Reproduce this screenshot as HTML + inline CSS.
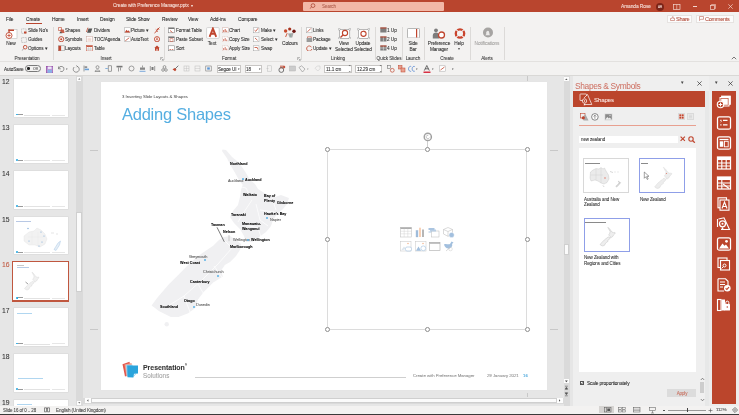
<!DOCTYPE html><html><head><meta charset="utf-8"><style>
html,body{margin:0;padding:0;}
body{width:739px;height:415px;overflow:hidden;position:relative;background:#f3f2f1;font-family:"Liberation Sans",sans-serif;}
.t{position:absolute;white-space:nowrap;will-change:transform;-webkit-text-stroke:0.07px currentColor;}
.r{position:absolute;}
</style></head><body>

<div class="r" style="left:0px;top:0px;width:739px;height:12.4px;background:#b9452e;"></div>
<div class="t" style="left:113px;top:2.47px;font-size:4.78px;line-height:7.65px;color:#f7e3dd;font-weight:400;letter-spacing:-0.092px;">Create with Preference Manager.pptx</div>
<div class="t" style="left:190.5px;top:2.97px;font-size:4.16px;line-height:6.66px;color:#f7e3dd;font-weight:400;letter-spacing:-0.080px;">&#9662;</div>
<div class="r" style="left:302.8px;top:2px;width:141px;height:8.7px;background:#f2b8a7;border-radius:1px;"></div>
<svg class="r" style="left:309px;top:3px;" width="7" height="6" viewBox="0 0 7 6"><circle cx="4" cy="2.6" r="1.9" fill="none" stroke="#a33a26" stroke-width="0.7"/><line x1="2.6" y1="4" x2="0.8" y2="5.6" stroke="#a33a26" stroke-width="0.7"/></svg>
<div class="t" style="left:321.8px;top:2.83px;font-size:4.58px;line-height:7.33px;color:#b0604f;font-weight:400;letter-spacing:-0.088px;">Search</div>
<div class="t" style="left:620.5px;top:2.79px;font-size:4.89px;line-height:7.82px;color:#f7e3dd;font-weight:400;letter-spacing:-0.094px;">Amanda Rose</div>
<div class="r" style="left:655.7px;top:2.5px;width:8px;height:8px;border-radius:50%;background:#7c2418;"></div>
<div class="t" style="left:559.7px;width:200px;text-align:center;top:4.71px;font-size:3.12px;line-height:4.99px;color:#f3d6cf;font-weight:400;letter-spacing:-0.060px;">AR</div>
<svg class="r" style="left:673px;top:3.5px;" width="8" height="6" viewBox="0 0 8 6"><rect x="0.5" y="0.5" width="6.5" height="5" fill="none" stroke="#f3d6cf" stroke-width="0.7"/><line x1="3.75" y1="0.5" x2="3.75" y2="5.5" stroke="#f3d6cf" stroke-width="0.6"/></svg>
<div class="r" style="left:692.5px;top:6.2px;width:4.5px;height:0.7px;background:#f3d6cf;"></div>
<svg class="r" style="left:709.5px;top:3.5px;" width="6" height="6" viewBox="0 0 6 6"><rect x="0.5" y="1.5" width="4" height="4" fill="none" stroke="#f3d6cf" stroke-width="0.7"/><path d="M1.5 1.5V0.5H5.5V4.5H4.5" fill="none" stroke="#f3d6cf" stroke-width="0.6"/></svg>
<svg class="r" style="left:727.5px;top:4px;" width="5" height="5" viewBox="0 0 5 5"><path d="M0.3 0.3L4.7 4.7M4.7 0.3L0.3 4.7" stroke="#f3d6cf" stroke-width="0.7"/></svg>
<div class="t" style="left:6.3px;top:15.79px;font-size:4.89px;line-height:7.82px;color:#262626;font-weight:400;letter-spacing:-0.094px;">File</div>
<div class="t" style="left:26px;top:15.79px;font-size:4.89px;line-height:7.82px;color:#262626;font-weight:400;letter-spacing:-0.094px;">Create</div>
<div class="t" style="left:51.7px;top:15.79px;font-size:4.89px;line-height:7.82px;color:#262626;font-weight:400;letter-spacing:-0.094px;">Home</div>
<div class="t" style="left:76.6px;top:15.79px;font-size:4.89px;line-height:7.82px;color:#262626;font-weight:400;letter-spacing:-0.094px;">Insert</div>
<div class="t" style="left:99.8px;top:15.79px;font-size:4.89px;line-height:7.82px;color:#262626;font-weight:400;letter-spacing:-0.094px;">Design</div>
<div class="t" style="left:126px;top:15.79px;font-size:4.89px;line-height:7.82px;color:#262626;font-weight:400;letter-spacing:-0.094px;">Slide Show</div>
<div class="t" style="left:162px;top:15.79px;font-size:4.89px;line-height:7.82px;color:#262626;font-weight:400;letter-spacing:-0.094px;">Review</div>
<div class="t" style="left:188px;top:15.79px;font-size:4.89px;line-height:7.82px;color:#262626;font-weight:400;letter-spacing:-0.094px;">View</div>
<div class="t" style="left:209.5px;top:15.79px;font-size:4.89px;line-height:7.82px;color:#262626;font-weight:400;letter-spacing:-0.094px;">Add-ins</div>
<div class="t" style="left:238px;top:15.79px;font-size:4.89px;line-height:7.82px;color:#262626;font-weight:400;letter-spacing:-0.094px;">Compare</div>
<div class="r" style="left:26px;top:23px;width:15.5px;height:0.9px;background:#b9452e;"></div>
<div class="r" style="left:667.3px;top:14.7px;width:24.7px;height:8.5px;background:#fcfcfc;box-sizing:border-box;border:0.5px solid #e6e3e1;"></div>
<svg class="r" style="left:669.8px;top:16.2px;" width="5" height="5" viewBox="0 0 5 5"><path d="M0.5 4.5V2.5H1.5L2.8 0.5 3.3 1 2.8 2.3H4.5V4.5Z" fill="none" stroke="#b04a38" stroke-width="0.5"/></svg>
<div class="t" style="left:676px;top:15.12px;font-size:5.6px;line-height:8.96px;color:#b04a38;font-weight:400;letter-spacing:-0.3px;">Share</div>
<div class="r" style="left:696.4px;top:14.7px;width:37.9px;height:8.5px;background:#fcfcfc;box-sizing:border-box;border:0.5px solid #e6e3e1;"></div>
<svg class="r" style="left:699px;top:16.2px;" width="5" height="5" viewBox="0 0 5 5"><path d="M0.5 0.5H4.5V3.3H1.8L0.5 4.5Z" fill="none" stroke="#b04a38" stroke-width="0.5"/></svg>
<div class="t" style="left:705px;top:15.12px;font-size:5.6px;line-height:8.96px;color:#b04a38;font-weight:400;letter-spacing:-0.33px;">Comments</div>
<div class="r" style="left:0px;top:60.8px;width:739px;height:0.9px;background:#e3e1df;"></div>
<div class="r" style="left:53.2px;top:26.5px;width:0.6px;height:33.5px;background:#dcdad8;"></div>
<div class="r" style="left:163.9px;top:26.5px;width:0.6px;height:33.5px;background:#dcdad8;"></div>
<div class="r" style="left:301.3px;top:26.5px;width:0.6px;height:33.5px;background:#dcdad8;"></div>
<div class="r" style="left:375.4px;top:26.5px;width:0.6px;height:33.5px;background:#dcdad8;"></div>
<div class="r" style="left:402.4px;top:26.5px;width:0.6px;height:33.5px;background:#dcdad8;"></div>
<div class="r" style="left:424.4px;top:26.5px;width:0.6px;height:33.5px;background:#dcdad8;"></div>
<div class="r" style="left:470px;top:26.5px;width:0.6px;height:33.5px;background:#dcdad8;"></div>
<div class="r" style="left:503.9px;top:26.5px;width:0.6px;height:33.5px;background:#dcdad8;"></div>
<div class="t" style="left:-73.5px;width:200px;text-align:center;top:55.46px;font-size:4.68px;line-height:7.49px;color:#3a3a3a;font-weight:400;letter-spacing:-0.090px;">Presentation</div>
<div class="t" style="left:6px;width:200px;text-align:center;top:55.46px;font-size:4.68px;line-height:7.49px;color:#3a3a3a;font-weight:400;letter-spacing:-0.090px;">Insert</div>
<div class="t" style="left:129px;width:200px;text-align:center;top:55.46px;font-size:4.68px;line-height:7.49px;color:#3a3a3a;font-weight:400;letter-spacing:-0.090px;">Format</div>
<div class="t" style="left:238px;width:200px;text-align:center;top:55.46px;font-size:4.68px;line-height:7.49px;color:#3a3a3a;font-weight:400;letter-spacing:-0.090px;">Linking</div>
<div class="t" style="left:288.5px;width:200px;text-align:center;top:55.46px;font-size:4.68px;line-height:7.49px;color:#3a3a3a;font-weight:400;letter-spacing:-0.090px;">Quick Slides</div>
<div class="t" style="left:313px;width:200px;text-align:center;top:55.46px;font-size:4.68px;line-height:7.49px;color:#3a3a3a;font-weight:400;letter-spacing:-0.090px;">Launch</div>
<div class="t" style="left:347px;width:200px;text-align:center;top:55.46px;font-size:4.68px;line-height:7.49px;color:#3a3a3a;font-weight:400;letter-spacing:-0.090px;">Create</div>
<div class="t" style="left:387.3px;width:200px;text-align:center;top:55.46px;font-size:4.68px;line-height:7.49px;color:#3a3a3a;font-weight:400;letter-spacing:-0.090px;">Alerts</div>
<svg class="r" style="left:730.8px;top:56.2px;" width="6" height="4" viewBox="0 0 6 4"><path d="M0.8 3.2L3 1 5.2 3.2" fill="none" stroke="#444" stroke-width="0.7"/></svg>
<svg class="r" style="left:4.5px;top:27.5px;" width="13" height="12" viewBox="0 0 13 12"><rect x="3.5" y="1.5" width="8.5" height="9" fill="#fff" stroke="#bdbdbd" stroke-width="0.6"/><path d="M3.5 1.5H9V3H3.5Z" fill="#c0462f"/><rect x="3.5" y="1.5" width="1.2" height="3.5" fill="#c0462f"/><circle cx="4" cy="7.5" r="3" fill="#fff" stroke="#c0462f" stroke-width="0.9"/><path d="M4 5.8V9.2M2.3 7.5H5.7" stroke="#c0462f" stroke-width="0.8"/></svg>
<div class="t" style="left:-88.7px;width:200px;text-align:center;top:39.77px;font-size:4.78px;line-height:7.65px;color:#2b2b2b;font-weight:400;letter-spacing:-0.092px;">New</div>
<svg class="r" style="left:21px;top:27.5px;" width="6" height="6" viewBox="0 0 6 6"><rect x="0.5" y="0.8" width="4.5" height="4.5" fill="none" stroke="#9a9a9a" stroke-width="0.5" stroke-dasharray="1 0.5"/><rect x="3" y="3.5" width="2.5" height="2" fill="#c0462f"/></svg>
<div class="t" style="left:28px;top:27.05px;font-size:4.68px;line-height:7.49px;color:#2b2b2b;font-weight:400;letter-spacing:-0.090px;">Slide No&#39;s</div>
<svg class="r" style="left:21px;top:36.5px;" width="6" height="6" viewBox="0 0 6 6"><rect x="0.6" y="0.6" width="4.8" height="4.8" fill="none" stroke="#8a8a8a" stroke-width="0.5" stroke-dasharray="1 0.6"/></svg>
<div class="t" style="left:28px;top:35.86px;font-size:4.68px;line-height:7.49px;color:#2b2b2b;font-weight:400;letter-spacing:-0.090px;">Guides</div>
<svg class="r" style="left:20.5px;top:45px;" width="7" height="6" viewBox="0 0 7 6"><circle cx="4.2" cy="2.2" r="1.8" fill="none" stroke="#c0462f" stroke-width="0.9"/><path d="M3 3.5L0.8 5.6" stroke="#888" stroke-width="0.7"/></svg>
<div class="t" style="left:28px;top:44.76px;font-size:4.68px;line-height:7.49px;color:#2b2b2b;font-weight:400;letter-spacing:-0.090px;">Options &#9662;</div>
<svg class="r" style="left:58px;top:27px;" width="7" height="6.5" viewBox="0 0 7 6.5"><path d="M0.5 0.5H3.5V3.5H0.5Z" fill="none" stroke="#c0462f" stroke-width="0.6"/><path d="M2.5 2.5H5.8L6.5 6H2.5Z" fill="#c0462f" opacity="0.85"/><path d="M2.5 4.5L4.5 6.3H1.3Z" fill="#555"/></svg>
<div class="t" style="left:65.4px;top:27.05px;font-size:4.68px;line-height:7.49px;color:#2b2b2b;font-weight:400;letter-spacing:-0.090px;">Shapes</div>
<svg class="r" style="left:58px;top:35.8px;" width="7" height="6.5" viewBox="0 0 7 6.5"><circle cx="3.2" cy="3.2" r="2.6" fill="none" stroke="#c0462f" stroke-width="0.9"/><circle cx="3.2" cy="3.2" r="1" fill="#c0462f"/></svg>
<div class="t" style="left:65.4px;top:35.86px;font-size:4.68px;line-height:7.49px;color:#2b2b2b;font-weight:400;letter-spacing:-0.090px;">Symbols</div>
<svg class="r" style="left:58px;top:44.5px;" width="7" height="6.5" viewBox="0 0 7 6.5"><rect x="0.5" y="0.8" width="5.8" height="5" fill="none" stroke="#888" stroke-width="0.5"/><rect x="0.5" y="0.8" width="2.6" height="5" fill="#c0462f"/></svg>
<div class="t" style="left:65.4px;top:44.76px;font-size:4.68px;line-height:7.49px;color:#2b2b2b;font-weight:400;letter-spacing:-0.090px;">Layouts</div>
<svg class="r" style="left:86px;top:27px;" width="7" height="6.5" viewBox="0 0 7 6.5"><path d="M1 5.8L2.5 1.5H6.3L4.8 5.8Z" fill="#555"/><path d="M0.4 5L1.9 0.7" stroke="#c0462f" stroke-width="0.8"/></svg>
<div class="t" style="left:93.8px;top:27.05px;font-size:4.68px;line-height:7.49px;color:#2b2b2b;font-weight:400;letter-spacing:-0.090px;">Dividers</div>
<svg class="r" style="left:86px;top:35.8px;" width="7" height="6.5" viewBox="0 0 7 6.5"><rect x="0.5" y="0.6" width="5.8" height="5.4" fill="#fff" stroke="#c9a49b" stroke-width="0.5"/><path d="M1.5 2.3H5.3M1.5 3.5H5.3M1.5 4.7H5.3" stroke="#e0a090" stroke-width="0.4"/></svg>
<div class="t" style="left:93.8px;top:35.86px;font-size:4.68px;line-height:7.49px;color:#2b2b2b;font-weight:400;letter-spacing:-0.090px;">TOC/Agenda</div>
<svg class="r" style="left:86px;top:44.5px;" width="7" height="6.5" viewBox="0 0 7 6.5"><rect x="0.5" y="0.6" width="5.8" height="5.4" fill="#fff" stroke="#c0462f" stroke-width="0.5"/><rect x="0.5" y="0.6" width="5.8" height="1.3" fill="#c0462f"/><path d="M0.5 3.3H6.3M0.5 4.6H6.3M2.4 1.9V6M4.3 1.9V6" stroke="#aaa" stroke-width="0.35"/></svg>
<div class="t" style="left:93.8px;top:44.76px;font-size:4.68px;line-height:7.49px;color:#2b2b2b;font-weight:400;letter-spacing:-0.090px;">Table</div>
<svg class="r" style="left:124px;top:27px;" width="7" height="6.5" viewBox="0 0 7 6.5"><rect x="0.5" y="0.8" width="5.8" height="4.8" fill="#fff" stroke="#999" stroke-width="0.45"/><path d="M0.7 5.4L2.5 2.8 3.8 4.2 4.6 3.3 6.2 5.4Z" fill="#c0462f"/></svg>
<div class="t" style="left:131px;top:27.05px;font-size:4.68px;line-height:7.49px;color:#2b2b2b;font-weight:400;letter-spacing:-0.090px;">Picture &#9662;</div>
<svg class="r" style="left:124px;top:35.8px;" width="7" height="6.5" viewBox="0 0 7 6.5"><rect x="0.5" y="0.8" width="5.8" height="4.8" fill="#fff" stroke="#999" stroke-width="0.45"/><path d="M1.3 4.8L5.2 1.8" stroke="#c0462f" stroke-width="0.8"/></svg>
<div class="t" style="left:131px;top:35.86px;font-size:4.68px;line-height:7.49px;color:#2b2b2b;font-weight:400;letter-spacing:-0.090px;">AutoText</div>
<svg class="r" style="left:153.5px;top:27px;" width="6" height="6.5" viewBox="0 0 6 6.5"><path d="M5.5 0.5L3 3M3.8 1.3L5 2.7M1.8 2.5L4 4.6M3 3.7L0.5 6" stroke="#c0462f" stroke-width="1"/></svg>
<svg class="r" style="left:153.5px;top:35.5px;" width="6" height="6.5" viewBox="0 0 6 6.5"><circle cx="3" cy="3.2" r="2.6" fill="#fff" stroke="#c0462f" stroke-width="0.9"/><path d="M1.8 4.6L3 1.6 4.2 4.6M2.3 3.6H3.7" fill="none" stroke="#c0462f" stroke-width="0.6"/></svg>
<svg class="r" style="left:153.5px;top:44.5px;" width="6" height="6.5" viewBox="0 0 6 6.5"><path d="M0.3 3L3 0.5 5.7 3H5V5.8H1V3Z" fill="#c0462f"/><rect x="2.5" y="3.8" width="1" height="2" fill="#f3f2f1"/></svg>
<svg class="r" style="left:159.5px;top:56.5px;" width="4" height="4" viewBox="0 0 4 4"><path d="M0.5 0.5H3M0.5 0.5V3M1.3 1.3L3.3 3.3M3.3 1.8V3.3H1.8" fill="none" stroke="#777" stroke-width="0.45"/></svg>
<svg class="r" style="left:168px;top:27px;" width="7" height="6.5" viewBox="0 0 7 6.5"><rect x="0.5" y="0.8" width="5.8" height="5" fill="#fff" stroke="#777" stroke-width="0.5"/><rect x="0.5" y="0.8" width="5.8" height="1.2" fill="#777"/><path d="M2 3.5L4.5 5.5" stroke="#c0462f" stroke-width="0.8"/></svg>
<div class="t" style="left:175.8px;top:27.05px;font-size:4.68px;line-height:7.49px;color:#2b2b2b;font-weight:400;letter-spacing:-0.090px;">Format Table</div>
<svg class="r" style="left:168px;top:35.8px;" width="7" height="6.5" viewBox="0 0 7 6.5"><rect x="0.5" y="0.8" width="5.8" height="5" fill="#fff" stroke="#777" stroke-width="0.5"/><rect x="0.5" y="0.8" width="5.8" height="1.2" fill="#777"/><rect x="2" y="2.8" width="3" height="2.5" fill="none" stroke="#c0462f" stroke-width="0.5"/></svg>
<div class="t" style="left:175.8px;top:35.86px;font-size:4.68px;line-height:7.49px;color:#2b2b2b;font-weight:400;letter-spacing:-0.090px;">Paste Subset</div>
<svg class="r" style="left:168px;top:44.5px;" width="7" height="6.5" viewBox="0 0 7 6.5"><rect x="0.5" y="0.8" width="5.8" height="5" fill="#fff" stroke="#777" stroke-width="0.5"/><path d="M1.5 4.5H3M3.8 4.5H5.3" stroke="#c0462f" stroke-width="0.7"/></svg>
<div class="t" style="left:175.8px;top:44.76px;font-size:4.68px;line-height:7.49px;color:#2b2b2b;font-weight:400;letter-spacing:-0.090px;">Sort</div>
<svg class="r" style="left:205.5px;top:27px;" width="14" height="12" viewBox="0 0 14 12"><rect x="0.6" y="0.6" width="12.6" height="10.8" rx="1" fill="#fff" stroke="#bcbcbc" stroke-width="0.6"/><path d="M3.6 9.8L6.9 1.6 10.2 9.8M4.9 6.8H8.9" fill="none" stroke="#c0462f" stroke-width="1.9"/></svg>
<div class="t" style="left:112.30000000000001px;width:200px;text-align:center;top:40.17px;font-size:4.78px;line-height:7.65px;color:#2b2b2b;font-weight:400;letter-spacing:-0.092px;">Text</div>
<svg class="r" style="left:221.5px;top:27px;" width="7" height="6.5" viewBox="0 0 7 6.5"><rect x="0.5" y="0.8" width="5.8" height="5" fill="#fff" stroke="#c9a49b" stroke-width="0.45"/><path d="M1.7 5V3M3.2 5V2M4.7 5V3.6" stroke="#c0462f" stroke-width="0.8"/></svg>
<div class="t" style="left:229px;top:27.05px;font-size:4.68px;line-height:7.49px;color:#2b2b2b;font-weight:400;letter-spacing:-0.090px;">Chart</div>
<svg class="r" style="left:221.5px;top:35.8px;" width="7" height="6.5" viewBox="0 0 7 6.5"><rect x="0.5" y="0.8" width="5.8" height="5" fill="#fff" stroke="#c9a49b" stroke-width="0.45" stroke-dasharray="1 0.5"/><path d="M1.7 5V3M3.2 5V2M4.7 5V3.6" stroke="#c0462f" stroke-width="0.7"/></svg>
<div class="t" style="left:229px;top:35.86px;font-size:4.68px;line-height:7.49px;color:#2b2b2b;font-weight:400;letter-spacing:-0.090px;">Copy Size</div>
<svg class="r" style="left:221.5px;top:44.5px;" width="7" height="6.5" viewBox="0 0 7 6.5"><rect x="0.5" y="0.8" width="5.8" height="5" fill="#fff" stroke="#c9a49b" stroke-width="0.45" stroke-dasharray="1 0.5"/><path d="M1.7 5V3M3.2 5V2M4.7 5V3.6" stroke="#c0462f" stroke-width="0.7"/></svg>
<div class="t" style="left:229px;top:44.76px;font-size:4.68px;line-height:7.49px;color:#2b2b2b;font-weight:400;letter-spacing:-0.090px;">Apply Size</div>
<svg class="r" style="left:253.3px;top:27px;" width="7" height="6.5" viewBox="0 0 7 6.5"><rect x="0.5" y="0.8" width="5.5" height="5" fill="#fff" stroke="#999" stroke-width="0.45"/><path d="M1.5 3.2L2.8 4.3 5 1.3" fill="none" stroke="#c0462f" stroke-width="0.8"/></svg>
<div class="t" style="left:260.8px;top:27.05px;font-size:4.68px;line-height:7.49px;color:#2b2b2b;font-weight:400;letter-spacing:-0.090px;">Make &#9662;</div>
<svg class="r" style="left:253.3px;top:35.8px;" width="7" height="6.5" viewBox="0 0 7 6.5"><rect x="0.5" y="0.8" width="5.5" height="5" fill="#fff" stroke="#999" stroke-width="0.45"/><path d="M2 2L4.5 4.3" stroke="#c0462f" stroke-width="0.8"/></svg>
<div class="t" style="left:260.8px;top:35.86px;font-size:4.68px;line-height:7.49px;color:#2b2b2b;font-weight:400;letter-spacing:-0.090px;">Select &#9662;</div>
<svg class="r" style="left:253.3px;top:44.5px;" width="7" height="6.5" viewBox="0 0 7 6.5"><rect x="0.5" y="0.8" width="5.5" height="5" fill="#fff" stroke="#999" stroke-width="0.45"/><path d="M1.5 2.5H4.2L5 4.5" fill="none" stroke="#c0462f" stroke-width="0.8"/></svg>
<div class="t" style="left:260.8px;top:44.76px;font-size:4.68px;line-height:7.49px;color:#2b2b2b;font-weight:400;letter-spacing:-0.090px;">Swap</div>
<svg class="r" style="left:283px;top:26px;" width="14" height="13" viewBox="0 0 14 13"><circle cx="2.6" cy="5" r="1.7" fill="#c84a2c"/><circle cx="6.7" cy="3" r="1.6" fill="#a8321e"/><circle cx="11" cy="5.3" r="1.7" fill="#6e1410"/><path d="M5 7.5L10.5 7 9.3 11.5H6.5Z" fill="#a9a9a9"/><path d="M7 8L8 11.3" stroke="#7fa89e" stroke-width="0.7"/><path d="M4.2 7.2L2.6 11" stroke="#c84a2c" stroke-width="0.9"/></svg>
<div class="t" style="left:189.60000000000002px;width:200px;text-align:center;top:40.17px;font-size:4.78px;line-height:7.65px;color:#2b2b2b;font-weight:400;letter-spacing:-0.092px;">Colours</div>
<svg class="r" style="left:296.5px;top:56.5px;" width="4" height="4" viewBox="0 0 4 4"><path d="M0.5 0.5H3M0.5 0.5V3M1.3 1.3L3.3 3.3M3.3 1.8V3.3H1.8" fill="none" stroke="#777" stroke-width="0.45"/></svg>
<svg class="r" style="left:306px;top:27px;" width="7" height="6.5" viewBox="0 0 7 6.5"><rect x="0.5" y="0.8" width="5.5" height="5" fill="#fff" stroke="#999" stroke-width="0.45"/><path d="M1.5 4.8L4.8 1.5" stroke="#c0462f" stroke-width="0.8"/></svg>
<div class="t" style="left:313.3px;top:27.05px;font-size:4.68px;line-height:7.49px;color:#2b2b2b;font-weight:400;letter-spacing:-0.090px;">Links</div>
<svg class="r" style="left:306px;top:35.8px;" width="7" height="6.5" viewBox="0 0 7 6.5"><rect x="0.6" y="2" width="5.6" height="4" fill="#9a9a9a"/><path d="M1.5 2V0.8H5.3V2" fill="none" stroke="#c0462f" stroke-width="0.6"/></svg>
<div class="t" style="left:313.3px;top:35.86px;font-size:4.68px;line-height:7.49px;color:#2b2b2b;font-weight:400;letter-spacing:-0.090px;">Package</div>
<svg class="r" style="left:306px;top:44.5px;" width="7" height="6.5" viewBox="0 0 7 6.5"><path d="M5.5 2.3A2.6 2.6 0 1 0 5.8 4" fill="none" stroke="#c0462f" stroke-width="0.8"/></svg>
<div class="t" style="left:313.3px;top:44.76px;font-size:4.68px;line-height:7.49px;color:#2b2b2b;font-weight:400;letter-spacing:-0.090px;">Update &#9662;</div>
<svg class="r" style="left:337.5px;top:27.5px;" width="13" height="11.5" viewBox="0 0 13 11.5"><rect x="1.3" y="1.3" width="10.5" height="9" fill="#fff" stroke="#777" stroke-width="0.5"/><circle cx="1.3" cy="1.3" r="1" fill="#fff" stroke="#777" stroke-width="0.4"/><circle cx="11.8" cy="1.3" r="1" fill="#fff" stroke="#777" stroke-width="0.4"/><circle cx="1.3" cy="10.3" r="1" fill="#fff" stroke="#777" stroke-width="0.4"/><circle cx="11.8" cy="10.3" r="1" fill="#fff" stroke="#777" stroke-width="0.4"/><circle cx="7" cy="5" r="2.6" fill="none" stroke="#c0462f" stroke-width="1.1"/><path d="M5.2 6.8L2.5 9.5" stroke="#c0462f" stroke-width="1.3"/></svg>
<div class="t" style="left:244.2px;width:200px;text-align:center;top:39.98px;font-size:4.78px;line-height:7.65px;color:#2b2b2b;font-weight:400;letter-spacing:-0.092px;">View</div>
<div class="t" style="left:244.2px;width:200px;text-align:center;top:46.48px;font-size:4.78px;line-height:7.65px;color:#2b2b2b;font-weight:400;letter-spacing:-0.092px;">Selected</div>
<svg class="r" style="left:356.5px;top:27.5px;" width="13" height="11.5" viewBox="0 0 13 11.5"><rect x="1.3" y="1.3" width="10.5" height="9" fill="#fff" stroke="#777" stroke-width="0.5"/><circle cx="1.3" cy="1.3" r="1" fill="#fff" stroke="#777" stroke-width="0.4"/><circle cx="11.8" cy="1.3" r="1" fill="#fff" stroke="#777" stroke-width="0.4"/><circle cx="1.3" cy="10.3" r="1" fill="#fff" stroke="#777" stroke-width="0.4"/><circle cx="11.8" cy="10.3" r="1" fill="#fff" stroke="#777" stroke-width="0.4"/><circle cx="6.5" cy="5.8" r="2.6" fill="none" stroke="#c0462f" stroke-width="1.1"/><path d="M6 3.2H7.8V4.6" fill="none" stroke="#c0462f" stroke-width="0.6"/></svg>
<div class="t" style="left:263px;width:200px;text-align:center;top:39.98px;font-size:4.78px;line-height:7.65px;color:#2b2b2b;font-weight:400;letter-spacing:-0.092px;">Update</div>
<div class="t" style="left:263px;width:200px;text-align:center;top:46.48px;font-size:4.78px;line-height:7.65px;color:#2b2b2b;font-weight:400;letter-spacing:-0.092px;">Selected</div>
<svg class="r" style="left:379.5px;top:27.2px;" width="7" height="6" viewBox="0 0 7 6"><rect x="0.3" y="0.5" width="6.2" height="5" fill="#7d7d7d"/><rect x="0.3" y="0.5" width="6.2" height="1" fill="#c0462f"/></svg>
<div class="t" style="left:387.2px;top:26.98px;font-size:4.78px;line-height:7.65px;color:#2b2b2b;font-weight:400;letter-spacing:-0.092px;">1 Up</div>
<svg class="r" style="left:379.5px;top:36px;" width="7" height="6" viewBox="0 0 7 6"><rect x="0.3" y="0.5" width="6.2" height="5" fill="#7d7d7d"/><path d="M3.4 0.5V5.5" stroke="#f3f2f1" stroke-width="0.5"/><rect x="0.3" y="0.5" width="6.2" height="1" fill="#c0462f"/></svg>
<div class="t" style="left:387.2px;top:35.77px;font-size:4.78px;line-height:7.65px;color:#2b2b2b;font-weight:400;letter-spacing:-0.092px;">2 Up</div>
<svg class="r" style="left:379.5px;top:44.8px;" width="7" height="6" viewBox="0 0 7 6"><rect x="0.3" y="0.5" width="6.2" height="5" fill="#7d7d7d"/><path d="M3.4 0.5V5.5M0.3 3H6.5" stroke="#f3f2f1" stroke-width="0.5"/><rect x="0.3" y="0.5" width="6.2" height="1" fill="#c0462f"/></svg>
<div class="t" style="left:387.2px;top:44.67px;font-size:4.78px;line-height:7.65px;color:#2b2b2b;font-weight:400;letter-spacing:-0.092px;">4 Up</div>
<svg class="r" style="left:406.8px;top:27.7px;" width="13" height="10.5" viewBox="0 0 13 10.5"><rect x="0.5" y="0.5" width="12" height="9.5" rx="0.8" fill="#fff" stroke="#8a8a8a" stroke-width="0.6"/><rect x="9" y="1" width="1.2" height="8.5" fill="#c0462f"/></svg>
<div class="t" style="left:313.3px;width:200px;text-align:center;top:39.88px;font-size:4.78px;line-height:7.65px;color:#2b2b2b;font-weight:400;letter-spacing:-0.092px;">Side</div>
<div class="t" style="left:313.3px;width:200px;text-align:center;top:46.48px;font-size:4.78px;line-height:7.65px;color:#2b2b2b;font-weight:400;letter-spacing:-0.092px;">Bar</div>
<svg class="r" style="left:432px;top:27.5px;" width="14" height="11" viewBox="0 0 14 11"><circle cx="4" cy="2.3" r="1.9" fill="#7d7d7d"/><path d="M0.8 10.5V7.5C0.8 5.5 2.3 4.6 4 4.6S7.2 5.5 7.2 7.5V10.5Z" fill="#7d7d7d"/><circle cx="9.5" cy="7" r="3" fill="#fff" stroke="#c0462f" stroke-width="1.3"/></svg>
<div class="t" style="left:339.2px;width:200px;text-align:center;top:39.77px;font-size:4.78px;line-height:7.65px;color:#2b2b2b;font-weight:400;letter-spacing:-0.092px;">Preference</div>
<div class="t" style="left:339.2px;width:200px;text-align:center;top:46.38px;font-size:4.78px;line-height:7.65px;color:#2b2b2b;font-weight:400;letter-spacing:-0.092px;">Manager</div>
<svg class="r" style="left:453.5px;top:27.5px;" width="12" height="11" viewBox="0 0 12 11"><circle cx="6" cy="5.5" r="4.2" fill="none" stroke="#c9442c" stroke-width="2.3"/><path d="M8.05 7.55L10.17 9.67 M3.95 7.55L1.83 9.67 M3.95 3.45L1.83 1.33 M8.05 3.45L10.17 1.33" stroke="#f3f2f1" stroke-width="1.1"/></svg>
<div class="t" style="left:359.3px;width:200px;text-align:center;top:40.08px;font-size:4.78px;line-height:7.65px;color:#2b2b2b;font-weight:400;letter-spacing:-0.092px;">Help</div>
<div class="t" style="left:359.3px;width:200px;text-align:center;top:46.91px;font-size:3.74px;line-height:5.98px;color:#555;font-weight:400;letter-spacing:-0.072px;">&#9662;</div>
<svg class="r" style="left:481.5px;top:27.3px;" width="12" height="11" viewBox="0 0 12 11"><circle cx="6" cy="5.5" r="5" fill="#a6a4a2"/><path d="M3.2 8.3L4.2 7.3V5.3A1.6 1.8 0 0 1 7 4.5L7.8 8.3Z" fill="#f3f2f1" opacity="0.9"/></svg>
<div class="t" style="left:387.3px;width:200px;text-align:center;top:40.08px;font-size:4.78px;line-height:7.65px;color:#a19f9d;font-weight:400;letter-spacing:-0.092px;">Notifications</div>
<div class="t" style="left:3.9px;top:65.66px;font-size:4.68px;line-height:7.49px;color:#2b2b2b;font-weight:400;letter-spacing:-0.090px;">AutoSave</div>
<div class="r" style="left:25.4px;top:65.2px;width:15.4px;height:6.8px;box-sizing:border-box;border:0.6px solid #7a7a7a;border-radius:3.4px;"></div>
<div class="r" style="left:27.4px;top:67.4px;width:2.4px;height:2.4px;border-radius:50%;background:#222;"></div>
<div class="t" style="left:32.6px;top:66.91px;font-size:3.74px;line-height:5.98px;color:#555;font-weight:400;letter-spacing:-0.072px;">Off</div>
<svg class="r" style="left:45.8px;top:65.6px;" width="7.5" height="7.5" viewBox="0 0 7.5 7.5"><rect x="0.5" y="0.5" width="6.5" height="6.5" fill="#b89ad6" stroke="#9a4fa8" stroke-width="0.8"/><rect x="2" y="0.6" width="3.5" height="2.3" fill="#f0e8f8"/><rect x="1.6" y="4" width="4.3" height="2.8" fill="#8ab0e8"/></svg>
<svg class="r" style="left:57px;top:65.3px;" width="8" height="7" viewBox="0 0 8 7"><path d="M1.5 1.5V3.8H3.8M1.8 3.6A2.6 2.6 0 1 1 3.2 6.3" fill="none" stroke="#555" stroke-width="0.6"/></svg>
<div class="t" style="left:65.8px;top:66.91px;font-size:3.12px;line-height:4.99px;color:#666;font-weight:400;letter-spacing:-0.060px;">&#9662;</div>
<svg class="r" style="left:71.8px;top:65px;" width="8" height="8" viewBox="0 0 8 8"><path d="M5 1.3A3 3 0 1 1 2.2 2" fill="none" stroke="#555" stroke-width="0.6"/><path d="M4.3 0.3L5.3 1.3 4.3 2.3" fill="none" stroke="#555" stroke-width="0.5"/></svg>
<svg class="r" style="left:83.0px;top:65.3px;" width="7" height="7" viewBox="0 0 7 7"><path d="M1 0.5V6.5" stroke="#666" stroke-width="0.6"/><rect x="1.6" y="1.3" width="2.6" height="1.6" fill="#888"/><rect x="1.6" y="3.6" width="4.4" height="1.6" fill="#6aa0d8"/></svg>
<svg class="r" style="left:93.5px;top:65.3px;" width="7" height="7" viewBox="0 0 7 7"><circle cx="3.5" cy="2.2" r="1.5" fill="none" stroke="#666" stroke-width="0.6"/><path d="M1 6.5C1 4.5 6 4.5 6 6.5Z" fill="none" stroke="#666" stroke-width="0.6"/></svg>
<svg class="r" style="left:104.8px;top:65.3px;" width="7" height="7" viewBox="0 0 7 7"><rect x="3.2" y="0.8" width="3.2" height="5.4" fill="none" stroke="#666" stroke-width="0.6"/><path d="M0.3 3.5H2.8" stroke="#6aa0d8" stroke-width="0.8"/></svg>
<svg class="r" style="left:116.2px;top:65.3px;" width="7" height="7" viewBox="0 0 7 7"><rect x="0.5" y="0.8" width="6" height="1.6" fill="#777"/><path d="M2.5 2.5V6.5M4.5 2.5V5.5" stroke="#777" stroke-width="0.7"/></svg>
<svg class="r" style="left:127.5px;top:65.3px;" width="7" height="7" viewBox="0 0 7 7"><circle cx="3.5" cy="3.5" r="2.5" fill="none" stroke="#666" stroke-width="0.6"/></svg>
<svg class="r" style="left:138.9px;top:65.3px;" width="7" height="7" viewBox="0 0 7 7"><path d="M3.5 0.5V2.5" stroke="#666" stroke-width="0.6"/><rect x="1" y="2.5" width="5" height="2.3" fill="#888"/><path d="M0.5 6.3H6.5" stroke="#5a95d5" stroke-width="0.8"/></svg>
<svg class="r" style="left:149.3px;top:65.3px;" width="7" height="7" viewBox="0 0 7 7"><path d="M1.3 1V6M5.7 1V6" stroke="#666" stroke-width="0.6"/><rect x="2.5" y="2" width="2" height="3" fill="#777"/></svg>
<svg class="r" style="left:160.7px;top:65.3px;" width="7" height="7" viewBox="0 0 7 7"><circle cx="3.5" cy="2" r="1.4" fill="none" stroke="#666" stroke-width="0.6"/><circle cx="2" cy="5" r="1.3" fill="none" stroke="#666" stroke-width="0.6"/><circle cx="5" cy="5" r="1.3" fill="none" stroke="#666" stroke-width="0.6"/></svg>
<svg class="r" style="left:172.0px;top:65.3px;" width="7" height="7" viewBox="0 0 7 7"><path d="M6.3 0.7L3 4" stroke="#555" stroke-width="0.8"/><path d="M0.5 4.3L3 6.3 4.5 4.8 2.8 3Z" fill="#c0462f"/></svg>
<svg class="r" style="left:182.5px;top:65.3px;" width="7" height="7" viewBox="0 0 7 7"><rect x="1" y="1" width="5" height="5" fill="none" stroke="#bbb" stroke-width="0.5"/><path d="M1 3.5H6M3.5 1V6" stroke="#bbb" stroke-width="0.4"/></svg>
<svg class="r" style="left:194.2px;top:65.3px;" width="7" height="7" viewBox="0 0 7 7"><rect x="1" y="1" width="5" height="5" fill="none" stroke="#bbb" stroke-width="0.5"/><path d="M1 3.5H6" stroke="#bbb" stroke-width="0.4"/></svg>
<svg class="r" style="left:205.2px;top:65.3px;" width="7" height="7" viewBox="0 0 7 7"><rect x="0.8" y="1" width="5.4" height="5" fill="none" stroke="#666" stroke-width="0.5"/><rect x="2.2" y="2.4" width="2.6" height="2.2" fill="#5a95d5"/></svg>
<div class="r" style="left:216.5px;top:64.5px;width:24.7px;height:8.2px;box-sizing:border-box;border:0.5px solid #c8c6c4;background:#fff;"></div>
<div class="t" style="left:218.3px;top:65.73px;font-size:4.58px;line-height:7.33px;color:#2b2b2b;font-weight:400;letter-spacing:-0.088px;">Segoe UI</div>
<div class="t" style="left:238.2px;top:66.91px;font-size:3.12px;line-height:4.99px;color:#444;font-weight:400;letter-spacing:-0.060px;">&#9662;</div>
<div class="r" style="left:244.6px;top:64.5px;width:17.7px;height:8.2px;box-sizing:border-box;border:0.5px solid #c8c6c4;background:#fff;"></div>
<div class="t" style="left:246.2px;top:65.73px;font-size:4.58px;line-height:7.33px;color:#2b2b2b;font-weight:400;letter-spacing:-0.088px;">18</div>
<div class="t" style="left:259.3px;top:66.91px;font-size:3.12px;line-height:4.99px;color:#444;font-weight:400;letter-spacing:-0.060px;">&#9662;</div>
<svg class="r" style="left:266.2px;top:65.3px;" width="7" height="7" viewBox="0 0 7 7"><rect x="1.5" y="0.8" width="4" height="5.4" fill="none" stroke="#bbb" stroke-width="0.5"/><path d="M0.5 3.5H2.5" stroke="#bbb" stroke-width="0.5"/></svg>
<svg class="r" style="left:277.5px;top:64.8px;" width="8" height="8" viewBox="0 0 8 8"><rect x="2" y="0.5" width="4.5" height="3" fill="#c0462f" opacity="0.6"/><circle cx="3.3" cy="5" r="2.4" fill="none" stroke="#555" stroke-width="0.8"/><circle cx="6.2" cy="2" r="1.1" fill="#c0462f"/></svg>
<svg class="r" style="left:288.5px;top:65.3px;" width="7" height="7" viewBox="0 0 7 7"><rect x="0.5" y="1" width="6" height="5" fill="#ccc" stroke="#aaa" stroke-width="0.4"/></svg>
<svg class="r" style="left:298.2px;top:65px;" width="8" height="8" viewBox="0 0 8 8"><path d="M1 2.5L3.5 0.8 7 4 4.5 7Z" fill="none" stroke="#999" stroke-width="0.7"/></svg>
<div class="t" style="left:306.8px;top:66.91px;font-size:3.12px;line-height:4.99px;color:#aaa;font-weight:400;letter-spacing:-0.060px;">&#9662;</div>
<svg class="r" style="left:313.5px;top:65.3px;" width="7" height="7" viewBox="0 0 7 7"><path d="M1 3.2L3.2 1H6V3.8L3.8 6Z" fill="none" stroke="#ccc" stroke-width="0.6"/></svg>
<div class="r" style="left:323.9px;top:64.5px;width:27.8px;height:8.2px;box-sizing:border-box;border:0.5px solid #c8c6c4;background:#fff;"></div>
<div class="t" style="left:326px;top:65.73px;font-size:4.58px;line-height:7.33px;color:#2b2b2b;font-weight:400;letter-spacing:-0.088px;">11.1 cm</div>
<div class="t" style="left:347.8px;top:64.79px;font-size:3.64px;line-height:5.82px;color:#444;font-weight:400;letter-spacing:-0.070px;">&#8963;</div>
<div class="t" style="left:347.8px;top:68.59px;font-size:3.64px;line-height:5.82px;color:#444;font-weight:400;letter-spacing:-0.070px;">&#8964;</div>
<div class="r" style="left:354.9px;top:64.5px;width:27.6px;height:8.2px;box-sizing:border-box;border:0.5px solid #c8c6c4;background:#fff;"></div>
<div class="t" style="left:357px;top:65.73px;font-size:4.58px;line-height:7.33px;color:#2b2b2b;font-weight:400;letter-spacing:-0.088px;">12.29 cm</div>
<div class="t" style="left:378.8px;top:64.79px;font-size:3.64px;line-height:5.82px;color:#444;font-weight:400;letter-spacing:-0.070px;">&#8963;</div>
<div class="t" style="left:378.8px;top:68.59px;font-size:3.64px;line-height:5.82px;color:#444;font-weight:400;letter-spacing:-0.070px;">&#8964;</div>
<svg class="r" style="left:386.9px;top:65px;" width="8" height="8" viewBox="0 0 8 8"><rect x="0.5" y="0.5" width="3" height="3" fill="none" stroke="#777" stroke-width="0.6"/><circle cx="5.3" cy="5.3" r="1.9" fill="none" stroke="#c0462f" stroke-width="0.7"/></svg>
<svg class="r" style="left:397.5px;top:65px;" width="8" height="8" viewBox="0 0 8 8"><rect x="0.5" y="0.5" width="3.5" height="3.5" fill="#e8a08f" stroke="#c0462f" stroke-width="0.5"/><rect x="3" y="3" width="4" height="4" fill="#e8a08f" stroke="#c0462f" stroke-width="0.5"/></svg>
<svg class="r" style="left:407.5px;top:65px;" width="8" height="8" viewBox="0 0 8 8"><path d="M3.2 1.5A2 2.5 0 1 0 3.2 6.2M6.8 1.5A2 2.5 0 1 0 6.8 6.2" fill="none" stroke="#4a7fd0" stroke-width="0.7"/></svg>
<div class="t" style="left:415.8px;top:66.91px;font-size:3.12px;line-height:4.99px;color:#666;font-weight:400;letter-spacing:-0.060px;">&#9662;</div>
<svg class="r" style="left:423.3px;top:64.8px;" width="8" height="8.5" viewBox="0 0 8 8.5"><path d="M1.3 5.6L3.8 0.5 6.3 5.6M2.2 3.8H5.4" fill="none" stroke="#333" stroke-width="0.7"/><rect x="0.5" y="6.6" width="7" height="1.2" fill="#d0021b"/></svg>
<div class="t" style="left:432px;top:66.91px;font-size:3.12px;line-height:4.99px;color:#666;font-weight:400;letter-spacing:-0.060px;">&#9662;</div>
<svg class="r" style="left:438.9px;top:65.3px;" width="7" height="7" viewBox="0 0 7 7"><rect x="0.5" y="0.8" width="6" height="5.4" fill="#fff" stroke="#aaa" stroke-width="0.5"/><path d="M1.5 5L5.5 2" stroke="#c0462f" stroke-width="0.8"/></svg>
<div class="t" style="left:451.5px;top:66.73px;font-size:3.33px;line-height:5.33px;color:#555;font-weight:400;letter-spacing:-0.064px;">&#9662;</div>
<div class="r" style="left:0px;top:75.3px;width:739px;height:0.7px;background:#e1dfdd;"></div>
<div class="r" style="left:0px;top:76px;width:739px;height:330.4px;background:#e6e6e6;"></div>
<div class="r" style="left:0px;top:75px;width:739px;height:1px;background:#d9d8d6;"></div>
<div class="r" style="left:75.9px;top:76px;width:7.1px;height:330.4px;background:#dadada;"></div>
<div class="r" style="left:76.9px;top:77px;width:4.6px;height:3.8px;background:#fdfdfd;"></div>
<svg class="r" style="left:76.9px;top:77px;" width="4.6" height="3.8" viewBox="0 0 4.6 3.8"><path d="M1.2 2.6L2.3 1.3 3.4 2.6Z" fill="#555"/></svg>
<div class="r" style="left:76.4px;top:212px;width:5.3px;height:79.5px;background:#fbfbfb;box-sizing:border-box;border:0.5px solid #cfcfcf;"></div>
<div class="r" style="left:76.9px;top:400.8px;width:4.6px;height:3.9px;background:#fdfdfd;"></div>
<svg class="r" style="left:76.9px;top:400.8px;" width="4.6" height="3.9" viewBox="0 0 4.6 3.9"><path d="M1.2 1.3L2.3 2.6 3.4 1.3Z" fill="#555"/></svg>
<div class="t" style="left:2px;top:77.16px;font-size:6.8px;line-height:10.88px;color:#333333;font-weight:400;">12</div>
<div class="r" style="left:13.7px;top:79.4px;width:54px;height:37.6px;background:#fff;box-shadow:0 0 0 0.5px #d6d6d6;"></div>
<div class="r" style="left:16.2px;top:113.7px;width:1.8px;height:1.8px;border-radius:50%;background:#29a8e0;"></div>
<div class="r" style="left:18.2px;top:114.2px;width:4.5px;height:0.8px;background:#9a9a9a;"></div>
<div class="r" style="left:23.7px;top:114.7px;width:26px;height:0.3px;background:#e2e2e2;"></div>
<div class="r" style="left:51.7px;top:114.5px;width:13px;height:0.5px;background:#e6e6e6;"></div>
<div class="t" style="left:2px;top:122.94px;font-size:6.8px;line-height:10.88px;color:#333333;font-weight:400;">13</div>
<div class="r" style="left:13.7px;top:125.18px;width:54px;height:37.6px;background:#fff;box-shadow:0 0 0 0.5px #d6d6d6;"></div>
<div class="r" style="left:16.2px;top:159.48000000000002px;width:1.8px;height:1.8px;border-radius:50%;background:#29a8e0;"></div>
<div class="r" style="left:18.2px;top:159.98000000000002px;width:4.5px;height:0.8px;background:#9a9a9a;"></div>
<div class="r" style="left:23.7px;top:160.48000000000002px;width:26px;height:0.3px;background:#e2e2e2;"></div>
<div class="r" style="left:51.7px;top:160.28px;width:13px;height:0.5px;background:#e6e6e6;"></div>
<div class="t" style="left:2px;top:168.72px;font-size:6.8px;line-height:10.88px;color:#333333;font-weight:400;">14</div>
<div class="r" style="left:13.7px;top:170.96px;width:54px;height:37.6px;background:#fff;box-shadow:0 0 0 0.5px #d6d6d6;"></div>
<div class="r" style="left:16.2px;top:205.26px;width:1.8px;height:1.8px;border-radius:50%;background:#29a8e0;"></div>
<div class="r" style="left:18.2px;top:205.76px;width:4.5px;height:0.8px;background:#9a9a9a;"></div>
<div class="r" style="left:23.7px;top:206.26px;width:26px;height:0.3px;background:#e2e2e2;"></div>
<div class="r" style="left:51.7px;top:206.06px;width:13px;height:0.5px;background:#e6e6e6;"></div>
<div class="t" style="left:2px;top:214.5px;font-size:6.8px;line-height:10.88px;color:#333333;font-weight:400;">15</div>
<div class="r" style="left:13.7px;top:216.74px;width:54px;height:37.6px;background:#fff;box-shadow:0 0 0 0.5px #d6d6d6;"></div>
<div class="r" style="left:16.2px;top:251.04000000000002px;width:1.8px;height:1.8px;border-radius:50%;background:#29a8e0;"></div>
<div class="r" style="left:18.2px;top:251.54000000000002px;width:4.5px;height:0.8px;background:#9a9a9a;"></div>
<div class="r" style="left:23.7px;top:252.04000000000002px;width:26px;height:0.3px;background:#e2e2e2;"></div>
<div class="r" style="left:51.7px;top:251.84px;width:13px;height:0.5px;background:#e6e6e6;"></div>
<div class="r" style="left:16.2px;top:221.04000000000002px;width:14.5px;height:0.7px;background:#b8c8e4;"></div>
<svg class="r" style="left:22.7px;top:226.74px;" width="40" height="30" viewBox="0 0 40 30"><path d="M1 9L6 5 11 4 14 1 18 3 22 7 24 12 22 17 17 20 12 18 6 18 1 14Z" fill="#f2f2f2" stroke="#d8d8d8" stroke-width="0.3"/><path d="M5 10H20M9 5V17M15 5V19" stroke="#e0e0e0" stroke-width="0.3"/><circle cx="5" cy="1.5" r="0.7" fill="#7aa8d8"/><circle cx="18" cy="5" r="0.6" fill="#7aa8d8"/><circle cx="21" cy="9" r="0.6" fill="#7aa8d8"/><circle cx="6" cy="14" r="0.6" fill="#7aa8d8"/><circle cx="19" cy="15" r="0.6" fill="#7aa8d8"/><circle cx="16" cy="19" r="0.6" fill="#7aa8d8"/><path d="M35 16L37.5 14 36.5 18 33 23.5 31 22.5Z" fill="#e6eef6" stroke="#8ab8e0" stroke-width="0.35"/><path d="M28 6H31M33 7H35" stroke="#bbb" stroke-width="0.4"/></svg>
<div class="t" style="left:2px;top:260.28px;font-size:6.8px;line-height:10.88px;color:#c0573f;font-weight:400;">16</div>
<div class="r" style="left:12.1px;top:260.91999999999996px;width:57.4px;height:40.9px;background:#c0573f;"></div>
<div class="r" style="left:13.4px;top:262.32px;width:54.6px;height:38.1px;background:#fff;"></div>
<div class="r" style="left:16.5px;top:265.12px;width:7px;height:0.5px;background:#c8c8c8;"></div>
<div class="r" style="left:16.5px;top:266.82px;width:12.5px;height:0.8px;background:#b8cce6;"></div>
<svg class="r" style="left:0px;top:0px;" width="70" height="406" viewBox="0 0 70 406"><g transform="translate(32,272.32)"><polygon points="0.00,-0.05 0.37,0.00 1.00,0.73 1.52,1.16 2.05,1.78 2.47,2.42 2.89,3.15 3.41,3.57 3.73,4.09 4.57,4.62 5.51,4.93 6.14,4.72 6.98,5.04 6.77,5.67 6.35,6.19 5.72,6.72 5.30,7.35 5.09,7.98 4.57,8.61 3.83,9.13 3.10,9.66 2.47,9.66 2.26,9.03 1.84,8.29 1.21,7.67 0.79,7.04 1.10,6.40 1.63,5.77 1.84,4.93 1.94,4.20 2.12,3.65 1.73,3.15 1.31,2.38 0.86,1.63 0.47,0.87 -0.05,0.10" fill="#f0f0f0" stroke="#c4c4c4" stroke-width="0.3"/><polygon points="0.13,9.13 0.79,9.03 1.42,9.45 1.94,9.87 1.86,10.46 1.42,11.13 0.79,11.76 0.24,12.07 -0.16,12.68 0.04,13.29 -0.98,13.90 -1.98,14.91 -2.59,15.72 -2.79,16.53 -3.60,17.14 -4.62,17.54 -5.43,17.54 -6.64,16.94 -7.44,16.33 -6.85,15.52 -5.63,14.10 -4.62,13.09 -3.41,11.88 -2.18,10.87 -0.98,10.06 -0.37,9.45" fill="#f0f0f0" stroke="#c4c4c4" stroke-width="0.3"/></g><path d="M25.5 282.0L28 284.0" stroke="#777" stroke-width="0.7"/></svg>
<div class="r" style="left:16.5px;top:296.82px;width:1.8px;height:1.8px;border-radius:50%;background:#29a8e0;"></div>
<div class="r" style="left:18.5px;top:297.32px;width:4.5px;height:0.8px;background:#9a9a9a;"></div>
<div class="r" style="left:24px;top:297.82px;width:26px;height:0.3px;background:#e2e2e2;"></div>
<div class="r" style="left:16.2px;top:296.82px;width:1.8px;height:1.8px;border-radius:50%;background:#29a8e0;"></div>
<div class="r" style="left:18.2px;top:297.32px;width:4.5px;height:0.8px;background:#9a9a9a;"></div>
<div class="r" style="left:23.7px;top:297.82px;width:26px;height:0.3px;background:#e2e2e2;"></div>
<div class="r" style="left:51.7px;top:297.62px;width:13px;height:0.5px;background:#e6e6e6;"></div>
<div class="t" style="left:2px;top:306.06px;font-size:6.8px;line-height:10.88px;color:#333333;font-weight:400;">17</div>
<div class="r" style="left:13.7px;top:308.3px;width:54px;height:37.6px;background:#fff;box-shadow:0 0 0 0.5px #d6d6d6;"></div>
<div class="r" style="left:16.2px;top:342.6px;width:1.8px;height:1.8px;border-radius:50%;background:#29a8e0;"></div>
<div class="r" style="left:18.2px;top:343.1px;width:4.5px;height:0.8px;background:#9a9a9a;"></div>
<div class="r" style="left:23.7px;top:343.6px;width:26px;height:0.3px;background:#e2e2e2;"></div>
<div class="r" style="left:51.7px;top:343.40000000000003px;width:13px;height:0.5px;background:#e6e6e6;"></div>
<div class="r" style="left:16.7px;top:312.6px;width:15px;height:0.8px;background:#b0d6f0;"></div>
<div class="t" style="left:2px;top:351.84px;font-size:6.8px;line-height:10.88px;color:#333333;font-weight:400;">18</div>
<div class="r" style="left:13.7px;top:354.08000000000004px;width:54px;height:37.6px;background:#fff;box-shadow:0 0 0 0.5px #d6d6d6;"></div>
<div class="r" style="left:16.2px;top:388.38000000000005px;width:1.8px;height:1.8px;border-radius:50%;background:#29a8e0;"></div>
<div class="r" style="left:18.2px;top:388.88000000000005px;width:4.5px;height:0.8px;background:#9a9a9a;"></div>
<div class="r" style="left:23.7px;top:389.38000000000005px;width:26px;height:0.3px;background:#e2e2e2;"></div>
<div class="r" style="left:51.7px;top:389.18000000000006px;width:13px;height:0.5px;background:#e6e6e6;"></div>
<div class="r" style="left:17.7px;top:378.08000000000004px;width:25px;height:0.8px;background:#b0d6f0;"></div>
<div class="t" style="left:2px;top:397.62px;font-size:6.8px;line-height:10.88px;color:#333333;font-weight:400;">19</div>
<div class="r" style="left:13.7px;top:399.86px;width:54px;height:37.6px;background:#fff;box-shadow:0 0 0 0.5px #d6d6d6;"></div>
<div class="r" style="left:16.2px;top:434.16px;width:1.8px;height:1.8px;border-radius:50%;background:#29a8e0;"></div>
<div class="r" style="left:18.2px;top:434.66px;width:4.5px;height:0.8px;background:#9a9a9a;"></div>
<div class="r" style="left:23.7px;top:435.16px;width:26px;height:0.3px;background:#e2e2e2;"></div>
<div class="r" style="left:51.7px;top:434.96000000000004px;width:13px;height:0.5px;background:#e6e6e6;"></div>
<div class="r" style="left:16.7px;top:404.16px;width:15px;height:0.8px;background:#b0d6f0;"></div>
<div class="r" style="left:527px;top:76px;width:0.6px;height:4.5px;background:#c8c8c8;"></div>
<div class="r" style="left:527px;top:393px;width:0.6px;height:4px;background:#c8c8c8;"></div>
<div class="r" style="left:90.4px;top:149.7px;width:8px;height:0.6px;background:#c8c8c8;"></div>
<div class="r" style="left:549.8px;top:149.7px;width:8.4px;height:0.6px;background:#c8c8c8;"></div>
<div class="r" style="left:90.4px;top:329.4px;width:8px;height:0.6px;background:#c8c8c8;"></div>
<div class="r" style="left:549.8px;top:329.4px;width:8.4px;height:0.6px;background:#c8c8c8;"></div>
<div class="r" style="left:101px;top:82.2px;width:446px;height:308.2px;background:#ffffff;box-shadow:0 0 0.6px #cfcfcf;"></div>
<div class="t" style="left:121.7px;top:93.86px;font-size:4.3px;line-height:6.88px;color:#404040;font-weight:400;letter-spacing:-0.03px;-webkit-text-stroke:0;">3 Inserting Slide Layouts &amp; Shapes</div>
<div class="t" style="left:121.6px;top:100.7px;font-size:16.5px;line-height:26.4px;color:#55aee1;font-weight:400;letter-spacing:-0.25px;-webkit-text-stroke:0;">Adding Shapes</div>
<svg class="r" style="left:122px;top:361px;" width="17" height="17" viewBox="0 0 17 17"><path d="M0.5 3.2L7.5 0.8 10 13 3 15.5Z" fill="#e2574c"/><path d="M2.5 3.5L9.5 2 11.5 14 4.5 15.5Z" fill="#f0a08f"/><path d="M3.8 3.8H10.5L11.5 14.5 4.8 15Z" fill="#9fd0ea"/><path d="M5.2 4.5H16V12.5C14 12.8 12.8 13.5 11.3 16.5L5.5 16.2Z" fill="#2aa4dc"/><path d="M11.3 16.5C12.3 14.3 13.6 13 16 12.5L12 12.8Z" fill="#d8eef8"/></svg>
<div class="t" style="left:142.6px;top:362.04px;font-size:6.95px;line-height:11.12px;color:#333;font-weight:700;letter-spacing:-0.02px;">Presentation</div>
<div class="t" style="left:185px;top:364.12px;font-size:2.6px;line-height:4.16px;color:#333;font-weight:400;letter-spacing:-0.050px;">&#174;</div>
<div class="t" style="left:142.6px;top:371.26px;font-size:6.3px;line-height:10.08px;color:#a0a0a0;font-weight:400;letter-spacing:0.05px;">Solutions</div>
<div class="r" style="left:195px;top:377.3px;width:211px;height:0.5px;background:#cfcfcf;"></div>
<div class="t" style="left:413px;top:372.66px;font-size:4.3px;line-height:6.88px;color:#8c8c8c;font-weight:400;letter-spacing:-0.02px;">Create with Preference Manager</div>
<div class="t" style="left:486.6px;top:372.66px;font-size:4.3px;line-height:6.88px;color:#8c8c8c;font-weight:400;letter-spacing:-0.02px;">29 January 2021</div>
<div class="t" style="left:523px;top:372.66px;font-size:4.3px;line-height:6.88px;color:#3a9fd8;font-weight:400;letter-spacing:0px;">16</div>
<svg class="r" style="left:140px;top:140px;" width="160" height="190" viewBox="0 0 160 190"><polygon points="82.5,9.5 86.0,10.0 92.0,17.0 97.0,21.0 102.0,27.0 106.0,33.0 110.0,40.0 115.0,44.0 118.0,49.0 126.0,54.0 135.0,57.0 141.0,55.0 149.0,58.0 147.0,64.0 143.0,69.0 137.0,74.0 133.0,80.0 131.0,86.0 126.0,92.0 119.0,97.0 112.0,102.0 106.0,102.0 104.0,96.0 100.0,89.0 94.0,83.0 90.0,77.0 93.0,71.0 98.0,65.0 100.0,57.0 101.0,50.0 102.7,44.8 99.0,40.0 95.0,32.7 90.7,25.5 87.0,18.3 82.0,11.0" fill="#f0f0f2"/><polygon points="83.7,97.0 90.0,96.0 96.0,100.0 101.0,104.0 100.2,109.6 96.0,116.0 90.0,122.0 84.8,125.0 81.0,130.8 82.9,136.6 73.2,142.4 63.6,152.0 57.8,159.7 55.9,167.4 48.2,173.2 38.5,177.0 30.8,177.0 19.3,171.3 11.6,165.5 17.3,157.8 28.9,144.3 38.5,134.7 50.0,123.1 61.7,113.5 73.2,105.8 79.0,100.0" fill="#f0f0f2"/><circle cx="26.7" cy="184.3" r="2.2" fill="#f0f0f2"/><path d="M97 46L106 48 110 56M112 60L104 72 98 82M116 64L120 80 128 86M132 58L136 70M102 84L118 88 122 100M120 70L134 72" fill="none" stroke="#fff" stroke-width="0.7"/><path d="M84 100L92 108M92 108L78 124 62 140 44 156 28 166M74 126L84 140M58 144L66 158 60 170M44 156L50 172" fill="none" stroke="#fff" stroke-width="0.7"/></svg>
<div class="t" style="left:230.4px;top:162.34px;font-size:3.7px;line-height:5.92px;color:#000000;font-weight:700;">Northland</div>
<div class="t" style="left:228px;top:177.62px;font-size:3.85px;line-height:6.16px;color:#5a5a5a;font-weight:400;letter-spacing:-0.074px;">Auckland</div>
<div class="r" style="left:241.8px;top:178.4px;width:2px;height:2px;border-radius:50%;background:#5cb3e6;"></div>
<div class="t" style="left:244.7px;top:177.74px;font-size:3.7px;line-height:5.92px;color:#000000;font-weight:700;">Auckland</div>
<div class="t" style="left:242.8px;top:192.64px;font-size:3.7px;line-height:5.92px;color:#000000;font-weight:700;">Waikato</div>
<div class="t" style="left:263.6px;top:193.94px;font-size:3.7px;line-height:5.92px;color:#000000;font-weight:700;">Bay of</div>
<div class="t" style="left:263.6px;top:198.94px;font-size:3.7px;line-height:5.92px;color:#000000;font-weight:700;">Plenty</div>
<div class="t" style="left:276.7px;top:200.84px;font-size:3.7px;line-height:5.92px;color:#000000;font-weight:700;">Gisborne</div>
<div class="t" style="left:230.8px;top:213.44px;font-size:3.7px;line-height:5.92px;color:#000000;font-weight:700;">Taranaki</div>
<div class="t" style="left:264.2px;top:211.84px;font-size:3.7px;line-height:5.92px;color:#000000;font-weight:700;">Hawke&#39;s Bay</div>
<div class="r" style="left:265.5px;top:217.2px;width:2px;height:2px;border-radius:50%;background:#5cb3e6;"></div>
<div class="t" style="left:269.7px;top:216.52px;font-size:3.85px;line-height:6.16px;color:#5a5a5a;font-weight:400;letter-spacing:-0.074px;">Napier</div>
<div class="t" style="left:241.6px;top:221.74px;font-size:3.7px;line-height:5.92px;color:#000000;font-weight:700;">Manawatu-</div>
<div class="t" style="left:242px;top:226.94px;font-size:3.7px;line-height:5.92px;color:#000000;font-weight:700;">Wanganui</div>
<div class="t" style="left:210.8px;top:223.14px;font-size:3.7px;line-height:5.92px;color:#000000;font-weight:700;">Tasman</div>
<svg class="r" style="left:210px;top:220px" width="30" height="30"><path d="M7 7.3L14.3 21.8" stroke="#222" stroke-width="0.6"/><path d="M19 15V21.2" stroke="#888" stroke-width="0.4"/></svg>
<div class="t" style="left:223.1px;top:230.44px;font-size:3.7px;line-height:5.92px;color:#000000;font-weight:700;">Nelson</div>
<div class="t" style="left:232.8px;top:236.52px;font-size:3.85px;line-height:6.16px;color:#5a5a5a;font-weight:400;letter-spacing:-0.074px;">Wellington</div>
<div class="r" style="left:247.4px;top:239.2px;width:2px;height:2px;border-radius:50%;background:#5cb3e6;"></div>
<div class="t" style="left:251.3px;top:237.94px;font-size:3.7px;line-height:5.92px;color:#000000;font-weight:700;">Wellington</div>
<div class="t" style="left:229.9px;top:245.24px;font-size:3.7px;line-height:5.92px;color:#000000;font-weight:700;">Marlborough</div>
<div class="t" style="left:188.6px;top:253.92px;font-size:3.85px;line-height:6.16px;color:#5a5a5a;font-weight:400;letter-spacing:-0.074px;">Greymouth</div>
<div class="r" style="left:203.5px;top:258.8px;width:2px;height:2px;border-radius:50%;background:#5cb3e6;"></div>
<div class="t" style="left:179.9px;top:261.34px;font-size:3.7px;line-height:5.92px;color:#000000;font-weight:700;">West Coast</div>
<div class="t" style="left:202.6px;top:269.32px;font-size:3.85px;line-height:6.16px;color:#5a5a5a;font-weight:400;letter-spacing:-0.074px;">Christchurch</div>
<div class="r" style="left:217px;top:274.6px;width:2px;height:2px;border-radius:50%;background:#5cb3e6;"></div>
<div class="t" style="left:190.1px;top:280.04px;font-size:3.7px;line-height:5.92px;color:#000000;font-weight:700;">Canterbury</div>
<div class="t" style="left:183.9px;top:298.94px;font-size:3.7px;line-height:5.92px;color:#000000;font-weight:700;">Otago</div>
<div class="t" style="left:196.3px;top:302.12px;font-size:3.85px;line-height:6.16px;color:#5a5a5a;font-weight:400;letter-spacing:-0.074px;">Dunedin</div>
<div class="r" style="left:193px;top:305.5px;width:2px;height:2px;border-radius:50%;background:#5cb3e6;"></div>
<div class="t" style="left:160.2px;top:305.14px;font-size:3.7px;line-height:5.92px;color:#000000;font-weight:700;">Southland</div>
<div class="r" style="left:327.1px;top:149.1px;width:200.4px;height:181px;box-sizing:border-box;border:0.8px solid #dcdcdc;"></div>
<div class="r" style="left:426.9px;top:140.5px;width:0.7px;height:8.5px;background:#d0d0d0;"></div>
<svg class="r" style="left:421.5px;top:130.5px;" width="12" height="12" viewBox="0 0 12 12"><circle cx="5.8" cy="5.9" r="3.6" fill="#fff" stroke="#a2a2a2" stroke-width="1.4"/><path d="M6.3 4.3A1.7 1.7 0 1 0 7.4 6.6" fill="none" stroke="#9a9a9a" stroke-width="0.6"/><path d="M8.8 5L10.2 5.9 8.8 6.8Z" fill="#9a9a9a"/></svg>
<div class="r" style="left:325.1px;top:147.1px;width:4.8px;height:4.8px;box-sizing:border-box;border:0.75px solid #8c8c8c;border-radius:50%;background:#fff;"></div>
<div class="r" style="left:325.1px;top:237.2px;width:4.8px;height:4.8px;box-sizing:border-box;border:0.75px solid #8c8c8c;border-radius:50%;background:#fff;"></div>
<div class="r" style="left:325.1px;top:327.40000000000003px;width:4.8px;height:4.8px;box-sizing:border-box;border:0.75px solid #8c8c8c;border-radius:50%;background:#fff;"></div>
<div class="r" style="left:424.8px;top:147.1px;width:4.8px;height:4.8px;box-sizing:border-box;border:0.75px solid #8c8c8c;border-radius:50%;background:#fff;"></div>
<div class="r" style="left:424.8px;top:327.40000000000003px;width:4.8px;height:4.8px;box-sizing:border-box;border:0.75px solid #8c8c8c;border-radius:50%;background:#fff;"></div>
<div class="r" style="left:524.8000000000001px;top:147.1px;width:4.8px;height:4.8px;box-sizing:border-box;border:0.75px solid #8c8c8c;border-radius:50%;background:#fff;"></div>
<div class="r" style="left:524.8000000000001px;top:237.2px;width:4.8px;height:4.8px;box-sizing:border-box;border:0.75px solid #8c8c8c;border-radius:50%;background:#fff;"></div>
<div class="r" style="left:524.8000000000001px;top:327.40000000000003px;width:4.8px;height:4.8px;box-sizing:border-box;border:0.75px solid #8c8c8c;border-radius:50%;background:#fff;"></div>
<svg class="r" style="left:400px;top:227.2px;opacity:0.72;" width="12" height="10.5" viewBox="0 0 12 10.5"><rect x="0.5" y="0.5" width="11" height="9.5" fill="#fff" stroke="#a0a0a0" stroke-width="0.5"/><rect x="0.5" y="0.5" width="11" height="1.3" fill="#777"/><path d="M0.5 4.3H11.5M0.5 6.8H11.5M4.2 1.8V10M7.8 1.8V10" stroke="#b8b8b8" stroke-width="0.4"/></svg>
<svg class="r" style="left:415px;top:227.2px;opacity:0.72;" width="10" height="10.5" viewBox="0 0 10 10.5"><rect x="1" y="3.5" width="2" height="6.5" fill="#7ea7d1" stroke="#6b8fb8" stroke-width="0.3"/><rect x="4" y="0.7" width="2" height="9.3" fill="#f5c09a"/><rect x="7" y="2.5" width="2" height="7.5" fill="#9a9a9a"/></svg>
<svg class="r" style="left:428.3px;top:227.2px;opacity:0.72;" width="12" height="10.5" viewBox="0 0 12 10.5"><path d="M0.5 1H6.5V3H0.5Z" fill="#8aaed5"/><path d="M0.5 5H3.5" stroke="#8aaed5" stroke-width="1"/><rect x="3.5" y="4" width="7.5" height="6" fill="#fff" stroke="#a0a0a0" stroke-width="0.5"/><rect x="2" y="2.5" width="6" height="2" fill="#8aaed5" opacity="0.8"/></svg>
<svg class="r" style="left:442.5px;top:227px;opacity:0.72;" width="12" height="11" viewBox="0 0 12 11"><path d="M5 0.5L9.5 2.5V7L5 9.3 0.5 7V2.5Z" fill="#fff" stroke="#9a9a9a" stroke-width="0.5"/><path d="M0.5 2.5L5 4.5 9.5 2.5M5 4.5V9.3" fill="none" stroke="#9a9a9a" stroke-width="0.5"/><circle cx="8.6" cy="8" r="2.6" fill="#7ea7d1" stroke="#fff" stroke-width="0.4"/></svg>
<svg class="r" style="left:400px;top:240.7px;opacity:0.72;" width="12" height="11" viewBox="0 0 12 11"><rect x="0.5" y="0.5" width="10.5" height="9.5" fill="#fff" stroke="#b0b0b0" stroke-width="0.5"/><circle cx="8" cy="2.5" r="0.8" fill="#f0a070"/><path d="M1 9.5L4 5.5 6 8Z" fill="#d0dde8"/><rect x="5.5" y="6" width="6" height="4" rx="1.5" fill="#fff" stroke="#7ea7d1" stroke-width="0.6"/></svg>
<svg class="r" style="left:415px;top:240.7px;opacity:0.72;" width="12" height="11" viewBox="0 0 12 11"><rect x="0.5" y="0.5" width="10.5" height="9.5" fill="#fff" stroke="#b0b0b0" stroke-width="0.5"/><circle cx="8" cy="2.5" r="0.8" fill="#f0a070"/><path d="M1 9.8L3.5 5.5 6 9.8Z" fill="#7ea7d1"/><circle cx="8.3" cy="7.3" r="2.4" fill="#fff" stroke="#7ea7d1" stroke-width="0.6"/></svg>
<svg class="r" style="left:428.5px;top:241.5px;opacity:0.72;" width="12" height="9.5" viewBox="0 0 12 9.5"><rect x="0.5" y="0.5" width="10.5" height="8" fill="#fff" stroke="#8a8a8a" stroke-width="0.6"/><rect x="0.5" y="0.5" width="10.5" height="1.2" fill="#8a8a8a"/></svg>
<svg class="r" style="left:442.5px;top:240.3px;opacity:0.72;" width="12" height="12" viewBox="0 0 12 12"><path d="M1 4.5C3 3 5 5 7 4L8.5 1.5 10.5 2.5 9 4C10 6 8 8.5 5.5 8.5 3 8.5 1.5 6.5 1 4.5Z" fill="#7ea7d1"/><path d="M3 11L7 7.5" stroke="#999" stroke-width="0.5"/><circle cx="7.5" cy="9" r="1.8" fill="none" stroke="#aaa" stroke-width="0.4"/></svg>
<div class="r" style="left:563.6px;top:76px;width:6.1px;height:330.4px;background:#dadada;"></div>
<div class="r" style="left:564.3px;top:76.8px;width:4.7px;height:4.7px;background:#fdfdfd;"></div>
<svg class="r" style="left:564.3px;top:76.8px;" width="4.7" height="4.7" viewBox="0 0 4.7 4.7"><path d="M1.2 3L2.35 1.6 3.5 3Z" fill="#555"/></svg>
<div class="r" style="left:564.3px;top:244px;width:4.7px;height:11px;background:#fbfbfb;box-sizing:border-box;border:0.5px solid #cfcfcf;"></div>
<div class="r" style="left:564.3px;top:378.7px;width:4.8px;height:4.5px;background:#fdfdfd;"></div>
<svg class="r" style="left:564.3px;top:378.7px;" width="4.8" height="4.5" viewBox="0 0 4.8 4.5"><path d="M1 1.6L2.4 3.2 3.8 1.6Z" fill="#444"/></svg>
<svg class="r" style="left:564.3px;top:384.5px;" width="4.8" height="12" viewBox="0 0 4.8 12"><path d="M1 1.2H3.8M1.1 4.2L2.4 2.2 3.7 4.2Z" fill="#555" stroke="#555" stroke-width="0.6"/><path d="M1 10.8H3.8M1.1 7.8L2.4 9.8 3.7 7.8Z" fill="#555" stroke="#555" stroke-width="0.6"/></svg>
<div class="r" style="left:83px;top:397.6px;width:480.6px;height:6.1px;background:#dadada;"></div>
<div class="r" style="left:85.2px;top:398.2px;width:5.5px;height:4.9px;background:#fdfdfd;"></div>
<svg class="r" style="left:85.2px;top:398.2px;" width="5.5" height="4.9" viewBox="0 0 5.5 4.9"><path d="M3.4 1.2L2 2.45 3.4 3.7Z" fill="#555"/></svg>
<div class="r" style="left:90.7px;top:398.2px;width:466px;height:4.9px;background:#fbfbfb;box-sizing:border-box;border:0.5px solid #cfcfcf;"></div>
<div class="r" style="left:557px;top:398.2px;width:5.5px;height:4.9px;background:#fdfdfd;"></div>
<svg class="r" style="left:557px;top:398.2px;" width="5.5" height="4.9" viewBox="0 0 5.5 4.9"><path d="M2 1.2L3.4 2.45 2 3.7Z" fill="#555"/></svg>
<div class="r" style="left:569.7px;top:76px;width:139px;height:330.4px;background:#efefef;"></div>
<div class="r" style="left:569.8px;top:76px;width:3.6px;height:330.4px;background:#e6e6e6;"></div>
<div class="r" style="left:705px;top:91.3px;width:3.8px;height:315px;background:#e7e8e8;"></div>
<div class="r" style="left:708.6px;top:76px;width:0.8px;height:330.4px;background:#dcdcdc;"></div>
<div class="r" style="left:709.4px;top:76px;width:29.6px;height:330.4px;background:#ececec;"></div>
<div class="t" style="left:574.6px;top:79.98px;font-size:8.4px;line-height:13.44px;color:#cd6d5f;font-weight:400;letter-spacing:-0.34px;-webkit-text-stroke:0;">Shapes &amp; Symbols</div>
<div class="t" style="left:681.2px;top:79.47px;font-size:4.78px;line-height:7.65px;color:#444;font-weight:400;letter-spacing:-0.092px;">&#9662;</div>
<svg class="r" style="left:696.5px;top:81.4px;" width="5" height="5" viewBox="0 0 5 5"><path d="M0.4 0.4L4.6 4.6M4.6 0.4L0.4 4.6" stroke="#333" stroke-width="0.7"/></svg>
<div class="t" style="left:715.3px;top:79.47px;font-size:4.78px;line-height:7.65px;color:#444;font-weight:400;letter-spacing:-0.092px;">&#9662;</div>
<svg class="r" style="left:727.5px;top:81.4px;" width="5" height="5" viewBox="0 0 5 5"><path d="M0.4 0.4L4.6 4.6M4.6 0.4L0.4 4.6" stroke="#333" stroke-width="0.7"/></svg>
<div class="r" style="left:572.8px;top:91.3px;width:132.3px;height:15.5px;background:#bb452c;"></div>
<svg class="r" style="left:578.5px;top:92.5px;" width="14" height="13" viewBox="0 0 14 13"><rect x="1" y="1" width="6.5" height="6.5" rx="0.5" fill="none" stroke="#fff" stroke-width="0.7"/><path d="M5 5L8.5 1.5 12.8 11.5H6" fill="#bb452c" stroke="#fff" stroke-width="0.7"/><circle cx="5.5" cy="8" r="2.2" fill="#bb452c" stroke="#fff" stroke-width="0.7"/><path d="M5.5 10.3L4.6 12.3H6.4Z" fill="#fff"/><circle cx="5.5" cy="8" r="0.7" fill="#fff"/></svg>
<div class="t" style="left:593.7px;top:94.82px;font-size:6.1px;line-height:9.76px;color:#fbe9e4;font-weight:400;letter-spacing:-0.1px;">Shapes</div>
<svg class="r" style="left:579.5px;top:112.5px;" width="9" height="8" viewBox="0 0 9 8"><rect x="0.5" y="0.5" width="4.5" height="4.5" fill="none" stroke="#c0462f" stroke-width="0.6"/><path d="M3 3.5L5.5 1.5 8.5 7.5H3.5Z" fill="#aaa"/><circle cx="3.3" cy="4.8" r="1.6" fill="#c0462f"/></svg>
<svg class="r" style="left:591.3px;top:112.7px;" width="8" height="8" viewBox="0 0 8 8"><circle cx="3.9" cy="3.9" r="3.3" fill="#fff" stroke="#555" stroke-width="0.7"/><path d="M3.9 5.8V2.3M2.6 3.5L3.9 2.2 5.2 3.5" fill="none" stroke="#555" stroke-width="0.6"/></svg>
<svg class="r" style="left:603.5px;top:112.5px;" width="9" height="8" viewBox="0 0 9 8"><rect x="0.3" y="0.3" width="8.4" height="7.4" rx="0.8" fill="#e2e2e2"/><rect x="1.2" y="1.2" width="6.6" height="5.6" fill="#8a8a8a"/><path d="M1.2 6.8L3.3 4 4.8 5.5 5.8 4.5 7.8 6.8Z" fill="#f0f0f0"/><circle cx="6" cy="2.6" r="0.6" fill="#f0f0f0"/></svg>
<div class="r" style="left:677.5px;top:113px;width:7px;height:7px;background:#fafafa;box-sizing:border-box;border:0.5px solid #dadada;"></div>
<svg class="r" style="left:677.5px;top:113px;" width="7" height="7" viewBox="0 0 7 7"><rect x="1.3" y="1.3" width="2" height="2" fill="#c0462f"/><rect x="3.7" y="1.3" width="2" height="2" fill="#c0462f"/><rect x="1.3" y="3.7" width="2" height="2" fill="#c0462f"/><rect x="3.7" y="3.7" width="2" height="2" fill="#c0462f"/></svg>
<div class="r" style="left:687px;top:113px;width:7px;height:7px;background:#e9e9e9;box-sizing:border-box;border:0.5px solid #dadada;"></div>
<svg class="r" style="left:687px;top:113px;" width="7" height="7" viewBox="0 0 7 7"><path d="M2 2.2H5M2 3.5H5M2 4.8H5" stroke="#c8c8c8" stroke-width="0.5"/></svg>
<div class="r" style="left:579px;top:125.3px;width:116.7px;height:0.9px;background:#e8a090;"></div>
<div class="r" style="left:579px;top:135.6px;width:99px;height:7px;background:#fff;"></div>
<div class="t" style="left:580.5px;top:136.22px;font-size:4.47px;line-height:7.15px;color:#333;font-weight:400;letter-spacing:-0.086px;">new zealand</div>
<svg class="r" style="left:680px;top:136.3px;" width="5.5" height="5.5" viewBox="0 0 5.5 5.5"><path d="M0.6 0.6L4.9 4.9M4.9 0.6L0.6 4.9" stroke="#c0462f" stroke-width="1.15"/></svg>
<svg class="r" style="left:688px;top:135.6px;" width="7.5" height="7.5" viewBox="0 0 7.5 7.5"><circle cx="3" cy="3" r="2.2" fill="none" stroke="#c0462f" stroke-width="1.1"/><path d="M4.6 4.6L6.8 6.8" stroke="#c0462f" stroke-width="1.3"/></svg>
<div class="r" style="left:579.4px;top:148.4px;width:116.4px;height:223.6px;background:#ffffff;"></div>
<div class="r" style="left:583.3px;top:158.3px;width:46.2px;height:34.9px;background:#fff;box-sizing:border-box;border:0.5px solid #d8d8d8;"></div>
<div class="r" style="left:638.9px;top:158.3px;width:46.4px;height:34.9px;background:#fff;box-sizing:border-box;border:0.6px solid #8f9fe8;"></div>
<div class="r" style="left:583.5px;top:217.6px;width:46.2px;height:34.4px;background:#fff;box-sizing:border-box;border:0.6px solid #8f9fe8;"></div>
<svg class="r" style="left:0px;top:0px;left:0;top:0;" width="739" height="415" viewBox="0 0 739 415"><polygon points="590.5,172 593,170 596,168.5 599,169 601,167.5 603,169 604.5,168 606,171 608.5,175 609,179 607,182.5 604,184 601,183 598,181 595,180 591,181 590,178" fill="#ebebeb" stroke="#b0b0b0" stroke-width="0.3"/><path d="M596 169V180M601 168V183M590.5 175H603" stroke="#bbb" stroke-width="0.25"/><circle cx="605" cy="178" r="0.8" fill="#e08070"/><path d="M603 185.5L604 186.8" stroke="#999" stroke-width="0.5"/><g transform="translate(618.3,181)"><polygon points="0.00,-0.02 0.12,0.00 0.33,0.25 0.51,0.39 0.68,0.60 0.82,0.81 0.96,1.05 1.14,1.19 1.24,1.37 1.52,1.54 1.84,1.65 2.05,1.58 2.33,1.68 2.26,1.89 2.12,2.07 1.91,2.24 1.77,2.45 1.70,2.66 1.52,2.87 1.28,3.05 1.03,3.22 0.82,3.22 0.75,3.01 0.61,2.77 0.40,2.56 0.26,2.35 0.37,2.14 0.54,1.93 0.61,1.65 0.65,1.40 0.71,1.22 0.58,1.05 0.44,0.79 0.29,0.54 0.16,0.29 -0.02,0.04" fill="#dddddd" stroke="#999" stroke-width="0.3"/><polygon points="0.04,3.05 0.26,3.01 0.47,3.15 0.65,3.29 0.62,3.49 0.47,3.71 0.26,3.92 0.08,4.03 -0.05,4.23 0.01,4.43 -0.33,4.63 -0.66,4.97 -0.86,5.24 -0.93,5.51 -1.20,5.71 -1.54,5.85 -1.81,5.85 -2.21,5.65 -2.48,5.44 -2.28,5.17 -1.88,4.70 -1.54,4.36 -1.14,3.96 -0.73,3.62 -0.33,3.35 -0.12,3.15" fill="#dddddd" stroke="#999" stroke-width="0.3"/></g><path d="M610 171.5L613 172.5M615 171.5V172.5M618 171.5V172.5" stroke="#999" stroke-width="0.4"/></svg>
<div class="r" style="left:585.3px;top:162.8px;width:15px;height:0.7px;background:#8a8a8a;"></div>
<svg class="r" style="left:0px;top:0px;left:0;top:0;" width="739" height="415" viewBox="0 0 739 415"><g transform="translate(663.5,167.5)"><polygon points="0.00,-0.06 0.44,0.00 1.19,0.88 1.81,1.38 2.44,2.12 2.94,2.88 3.44,3.75 4.06,4.25 4.44,4.88 5.44,5.50 6.56,5.88 7.31,5.62 8.31,6.00 8.06,6.75 7.56,7.38 6.81,8.00 6.31,8.75 6.06,9.50 5.44,10.25 4.56,10.88 3.69,11.50 2.94,11.50 2.69,10.75 2.19,9.88 1.44,9.12 0.94,8.38 1.31,7.62 1.94,6.88 2.19,5.88 2.31,5.00 2.52,4.35 2.06,3.75 1.56,2.84 1.02,1.94 0.56,1.04 -0.06,0.12" fill="#ededed" stroke="#c4c4c4" stroke-width="0.3"/><polygon points="0.15,10.88 0.94,10.75 1.69,11.25 2.31,11.75 2.21,12.45 1.69,13.25 0.94,14.00 0.29,14.38 -0.19,15.10 0.05,15.83 -1.16,16.55 -2.36,17.75 -3.09,18.71 -3.32,19.67 -4.29,20.40 -5.50,20.88 -6.46,20.88 -7.90,20.16 -8.86,19.44 -8.15,18.48 -6.70,16.79 -5.50,15.59 -4.06,14.14 -2.60,12.94 -1.16,11.98 -0.44,11.25" fill="#ededed" stroke="#c4c4c4" stroke-width="0.3"/></g><path d="M644.3 172V178.3L645.8 176.8 647.3 179.5 648.2 179 646.8 176.3H649Z" fill="#fff" stroke="#333" stroke-width="0.45"/><circle cx="666.5" cy="173.5" r="0.6" fill="#e08070"/></svg>
<div class="r" style="left:641.3px;top:162.8px;width:6.7px;height:0.7px;background:#8a8a8a;"></div>
<svg class="r" style="left:0px;top:0px;left:0;top:0;" width="739" height="415" viewBox="0 0 739 415"><g transform="translate(607.9,227.5)"><polygon points="0.00,-0.06 0.39,0.00 1.04,0.77 1.59,1.21 2.15,1.87 2.58,2.53 3.02,3.30 3.58,3.74 3.90,4.29 4.79,4.84 5.78,5.17 6.43,4.95 7.32,5.28 7.09,5.94 6.66,6.49 6.00,7.04 5.55,7.70 5.33,8.36 4.79,9.02 4.01,9.57 3.25,10.12 2.58,10.12 2.37,9.46 1.93,8.69 1.26,8.03 0.82,7.37 1.16,6.71 1.71,6.05 1.93,5.17 2.04,4.40 2.22,3.83 1.81,3.30 1.38,2.50 0.90,1.71 0.49,0.91 -0.06,0.11" fill="#eeeeee" stroke="#aaaaaa" stroke-width="0.35"/><polygon points="0.13,9.57 0.82,9.46 1.49,9.90 2.04,10.34 1.95,10.96 1.49,11.66 0.82,12.32 0.25,12.65 -0.17,13.29 0.04,13.93 -1.02,14.56 -2.08,15.62 -2.72,16.47 -2.93,17.31 -3.77,17.95 -4.84,18.37 -5.69,18.37 -6.95,17.74 -7.80,17.11 -7.17,16.26 -5.90,14.77 -4.84,13.72 -3.58,12.44 -2.29,11.38 -1.02,10.54 -0.39,9.90" fill="#eeeeee" stroke="#aaaaaa" stroke-width="0.35"/></g></svg>
<div class="r" style="left:585.3px;top:221.8px;width:20.7px;height:0.7px;background:#8a8a8a;"></div>
<div class="t" style="left:583.8px;top:195.58px;font-size:4.52px;line-height:7.23px;color:#333;font-weight:400;letter-spacing:-0.087px;">Australia and New</div>
<div class="t" style="left:583.8px;top:200.98px;font-size:4.52px;line-height:7.23px;color:#333;font-weight:400;letter-spacing:-0.087px;">Zealand</div>
<div class="t" style="left:639.5px;top:195.58px;font-size:4.52px;line-height:7.23px;color:#333;font-weight:400;letter-spacing:-0.087px;">New Zealand</div>
<div class="t" style="left:583.8px;top:254.28px;font-size:4.52px;line-height:7.23px;color:#333;font-weight:400;letter-spacing:-0.087px;">New Zealand with</div>
<div class="t" style="left:583.8px;top:259.69px;font-size:4.52px;line-height:7.23px;color:#333;font-weight:400;letter-spacing:-0.087px;">Regions and Cities</div>
<div class="r" style="left:579.8px;top:381.1px;width:4.2px;height:4.2px;background:#fff;box-sizing:border-box;border:0.6px solid #555;"></div>
<svg class="r" style="left:579.8px;top:381.1px;" width="4.2" height="4.2" viewBox="0 0 4.2 4.2"><path d="M0.8 2L1.7 3 3.3 1" fill="none" stroke="#333" stroke-width="0.6"/></svg>
<div class="t" style="left:586.7px;top:380.21px;font-size:4.73px;line-height:7.57px;color:#262626;font-weight:400;letter-spacing:-0.091px;">Scale proportionately</div>
<div class="r" style="left:667.2px;top:388.8px;width:28.6px;height:8.4px;background:#dcdcdc;"></div>
<div class="t" style="left:581.5px;width:200px;text-align:center;top:390.12px;font-size:4.47px;line-height:7.15px;color:#c0462f;font-weight:400;opacity:0.75;letter-spacing:-0.086px;">Apply</div>
<div class="r" style="left:699.7px;top:377px;width:4.5px;height:26px;background:#f0f0f0;"></div>
<svg class="r" style="left:700px;top:376.5px;" width="5" height="4" viewBox="0 0 5 4"><path d="M0.8 3L2.5 1.2 4.2 3" fill="none" stroke="#444" stroke-width="0.6"/></svg>
<div class="r" style="left:699.9px;top:382.3px;width:4.6px;height:10.4px;background:#cdcdcd;"></div>
<svg class="r" style="left:700px;top:398px;" width="5" height="4" viewBox="0 0 5 4"><path d="M0.8 1L2.5 2.8 4.2 1" fill="none" stroke="#444" stroke-width="0.6"/></svg>
<div class="r" style="left:711.6px;top:91.3px;width:24.5px;height:312.3px;background:#bb452c;"></div>
<svg class="r" style="left:716.2px;top:95.3px;" width="16" height="14" viewBox="0 0 16 14"><rect x="5.5" y="1" width="9" height="8.5" fill="#fff" stroke="#fff" stroke-width="0.75"/><rect x="4" y="2.5" width="9" height="8.5" fill="#bb452c" stroke="#fff" stroke-width="1.00"/><rect x="5.2" y="3.7" width="6.6" height="6.1" fill="#fff"/><circle cx="4.5" cy="9.5" r="3.2" fill="#bb452c" stroke="#fff" stroke-width="1.12"/><path d="M4.5 7.6V11.4M2.6 9.5H6.4" stroke="#fff" stroke-width="1.00"/></svg>
<svg class="r" style="left:716.2px;top:115.55px;" width="16" height="14" viewBox="0 0 16 14"><rect x="1.5" y="0.8" width="13" height="12.4" rx="1.8" fill="none" stroke="#fff" stroke-width="1.25"/><path d="M4.3 4.3H5.5M4.3 8.8H5.5M7 4.3H11.5M7 8.8H11.5" stroke="#fff" stroke-width="1.25"/><path d="M4.5 6.2L5.8 5.3" stroke="#fff" stroke-width="0.62"/></svg>
<svg class="r" style="left:716.2px;top:135.8px;" width="16" height="14" viewBox="0 0 16 14"><rect x="1.5" y="0.8" width="13" height="12.4" rx="1.8" fill="none" stroke="#fff" stroke-width="1.25"/><path d="M3.5 3.5H12.5" stroke="#fff" stroke-width="1.25"/><rect x="3.8" y="5.3" width="3.5" height="5.5" fill="#fff"/><rect x="8.5" y="5.3" width="3.7" height="5.5" fill="none" stroke="#fff" stroke-width="0.88"/></svg>
<svg class="r" style="left:716.2px;top:156.05px;" width="16" height="14" viewBox="0 0 16 14"><rect x="1.5" y="1" width="13" height="12" fill="none" stroke="#fff" stroke-width="1.25"/><rect x="1.5" y="1" width="13" height="3" fill="#fff"/><path d="M1.5 7H14.5M1.5 10H14.5M5.8 4V13M10.2 4V13" stroke="#fff" stroke-width="1.12"/></svg>
<svg class="r" style="left:716.2px;top:176.3px;" width="16" height="14" viewBox="0 0 16 14"><rect x="1.5" y="1" width="13" height="12" fill="none" stroke="#fff" stroke-width="1.25"/><rect x="1.5" y="1" width="13" height="3" fill="#fff"/><path d="M1.5 7H14.5M1.5 10H14.5M5.8 4V13" stroke="#fff" stroke-width="1.12"/><path d="M7 8L13 12.5" stroke="#fff" stroke-width="1.25"/></svg>
<svg class="r" style="left:716.2px;top:196.55px;" width="16" height="14" viewBox="0 0 16 14"><rect x="2" y="0.8" width="8.5" height="10" fill="none" stroke="#fff" stroke-width="1.12"/><rect x="4" y="3" width="9" height="10.2" fill="#bb452c" stroke="#fff" stroke-width="1.12"/><path d="M6 11.5L8.5 5 11 11.5M7 9.5H10" fill="none" stroke="#fff" stroke-width="1.12"/></svg>
<svg class="r" style="left:716.2px;top:216.8px;" width="16" height="14" viewBox="0 0 16 14"><path d="M2.5 2L8 0.8 13.5 12.5H5" fill="none" stroke="#fff" stroke-width="1.12"/><circle cx="6.5" cy="6.8" r="3" fill="#bb452c" stroke="#fff" stroke-width="1.25"/><circle cx="6.5" cy="6.8" r="1" fill="#fff"/><path d="M6.5 9.8L5 13H8Z" fill="#fff"/><path d="M1.5 2V10" stroke="#fff" stroke-width="1.12"/></svg>
<svg class="r" style="left:716.2px;top:237.05px;" width="16" height="14" viewBox="0 0 16 14"><rect x="1.5" y="0.8" width="13" height="12.4" rx="1.8" fill="none" stroke="#fff" stroke-width="1.25"/><circle cx="10.5" cy="4.3" r="1.4" fill="#fff"/><path d="M3 11.5L6.5 6.5 8.5 8.8 10 7.5 13 11.5Z" fill="#fff"/></svg>
<svg class="r" style="left:716.2px;top:257.3px;" width="16" height="14" viewBox="0 0 16 14"><rect x="2" y="1" width="9" height="9.5" fill="none" stroke="#fff" stroke-width="1.12"/><rect x="4.5" y="3.5" width="9" height="9.5" fill="#bb452c" stroke="#fff" stroke-width="1.12"/><circle cx="8.5" cy="8.5" r="1.5" fill="none" stroke="#fff" stroke-width="1.00"/><path d="M7.5 9.5L5.5 11.5" stroke="#fff" stroke-width="1.00"/></svg>
<svg class="r" style="left:716.2px;top:277.55px;" width="16" height="14" viewBox="0 0 16 14"><path d="M2 0.8H9.5L12 3.3V8" fill="none" stroke="#fff" stroke-width="1.12"/><path d="M2 0.8V13H8" fill="none" stroke="#fff" stroke-width="1.12"/><path d="M4 4H9M4 6.5H9M4 9H7" stroke="#fff" stroke-width="1.00"/><circle cx="11.3" cy="10.3" r="3.3" fill="#fff"/><path d="M9.6 10.3L10.9 11.5 13 9.2" fill="none" stroke="#c0462f" stroke-width="1.12"/></svg>
<svg class="r" style="left:716.2px;top:297.8px;" width="16" height="14" viewBox="0 0 16 14"><rect x="1.5" y="1.5" width="3.5" height="11" fill="none" stroke="#fff" stroke-width="1.12"/><rect x="5.5" y="1.5" width="3.5" height="11" fill="#fff"/><rect x="8.5" y="6" width="5.5" height="6.5" rx="0.5" fill="#fff"/><path d="M9.8 6V4.6A1.5 1.5 0 0 1 12.8 4.6V6" fill="none" stroke="#fff" stroke-width="1.00"/><circle cx="11.3" cy="9" r="0.8" fill="#c0462f"/></svg>
<div class="r" style="left:0px;top:406.4px;width:739px;height:7.1px;background:#f3f2f1;"></div>
<div class="r" style="left:0px;top:413.5px;width:739px;height:1.5px;background:#3a3a3a;"></div>
<div class="t" style="left:3px;top:407.02px;font-size:4.47px;line-height:7.15px;color:#444;font-weight:400;letter-spacing:-0.086px;">Slide 16 of 0 .. 28</div>
<svg class="r" style="left:43.5px;top:407.3px;" width="6" height="5.5" viewBox="0 0 6 5.5"><path d="M0.5 0.8H2.5V4.8H0.5ZM3.5 0.8H5.5V4.8H3.5Z" fill="none" stroke="#444" stroke-width="0.6"/><path d="M2.5 1.3H3.5" stroke="#444" stroke-width="0.5"/></svg>
<div class="t" style="left:56.4px;top:406.93px;font-size:4.58px;line-height:7.33px;color:#444;font-weight:400;letter-spacing:-0.088px;">English (United Kingdom)</div>
<div class="r" style="left:599px;top:406.2px;width:14.6px;height:7.2px;background:#d6d4d2;"></div>
<svg class="r" style="left:603.5px;top:407.2px;" width="8" height="5.5" viewBox="0 0 8 5.5"><rect x="0.5" y="0.5" width="6.5" height="4.5" fill="none" stroke="#555" stroke-width="0.5"/><path d="M2.5 0.5V5" stroke="#555" stroke-width="0.5"/><rect x="3.3" y="1.5" width="2.8" height="2.5" fill="#555"/></svg>
<svg class="r" style="left:618px;top:407.2px;" width="8" height="5.5" viewBox="0 0 8 5.5"><rect x="0.5" y="0.5" width="3" height="2" fill="none" stroke="#555" stroke-width="0.45"/><rect x="4.2" y="0.5" width="3" height="2" fill="none" stroke="#555" stroke-width="0.45"/><rect x="0.5" y="3" width="3" height="2" fill="none" stroke="#555" stroke-width="0.45"/><rect x="4.2" y="3" width="3" height="2" fill="none" stroke="#555" stroke-width="0.45"/></svg>
<svg class="r" style="left:633px;top:407.2px;" width="8" height="5.5" viewBox="0 0 8 5.5"><rect x="0.5" y="0.5" width="6.5" height="4.5" fill="none" stroke="#555" stroke-width="0.5"/><path d="M0.5 2.2H7M0.5 3.5H7" stroke="#555" stroke-width="0.4"/></svg>
<svg class="r" style="left:648.5px;top:407px;" width="7" height="6.5" viewBox="0 0 7 6.5"><rect x="0.5" y="0.5" width="6" height="3.2" fill="none" stroke="#555" stroke-width="0.5"/><path d="M3.5 3.7V6M2 6H5" stroke="#555" stroke-width="0.5"/></svg>
<div class="r" style="left:662.7px;top:409.7px;width:2.6px;height:0.5px;background:#555;"></div>
<div class="r" style="left:667.7px;top:409.8px;width:38.8px;height:0.5px;background:#999;"></div>
<div class="r" style="left:687.2px;top:407.6px;width:1.2px;height:4.5px;background:#444;"></div>
<svg class="r" style="left:707.5px;top:407.5px;" width="5" height="5" viewBox="0 0 5 5"><path d="M0.5 2.5H4.5M2.5 0.5V4.5" stroke="#555" stroke-width="0.6"/></svg>
<div class="t" style="left:716px;top:407.1px;font-size:4.37px;line-height:6.99px;color:#444;font-weight:400;letter-spacing:-0.084px;">112%</div>
<svg class="r" style="left:731.5px;top:406.8px;" width="6" height="6" viewBox="0 0 6 6"><path d="M3 0.3L5.7 3 3 5.7 0.3 3Z" fill="none" stroke="#444" stroke-width="0.5"/><rect x="2" y="2" width="2" height="2" fill="none" stroke="#444" stroke-width="0.4"/></svg>
</body></html>
